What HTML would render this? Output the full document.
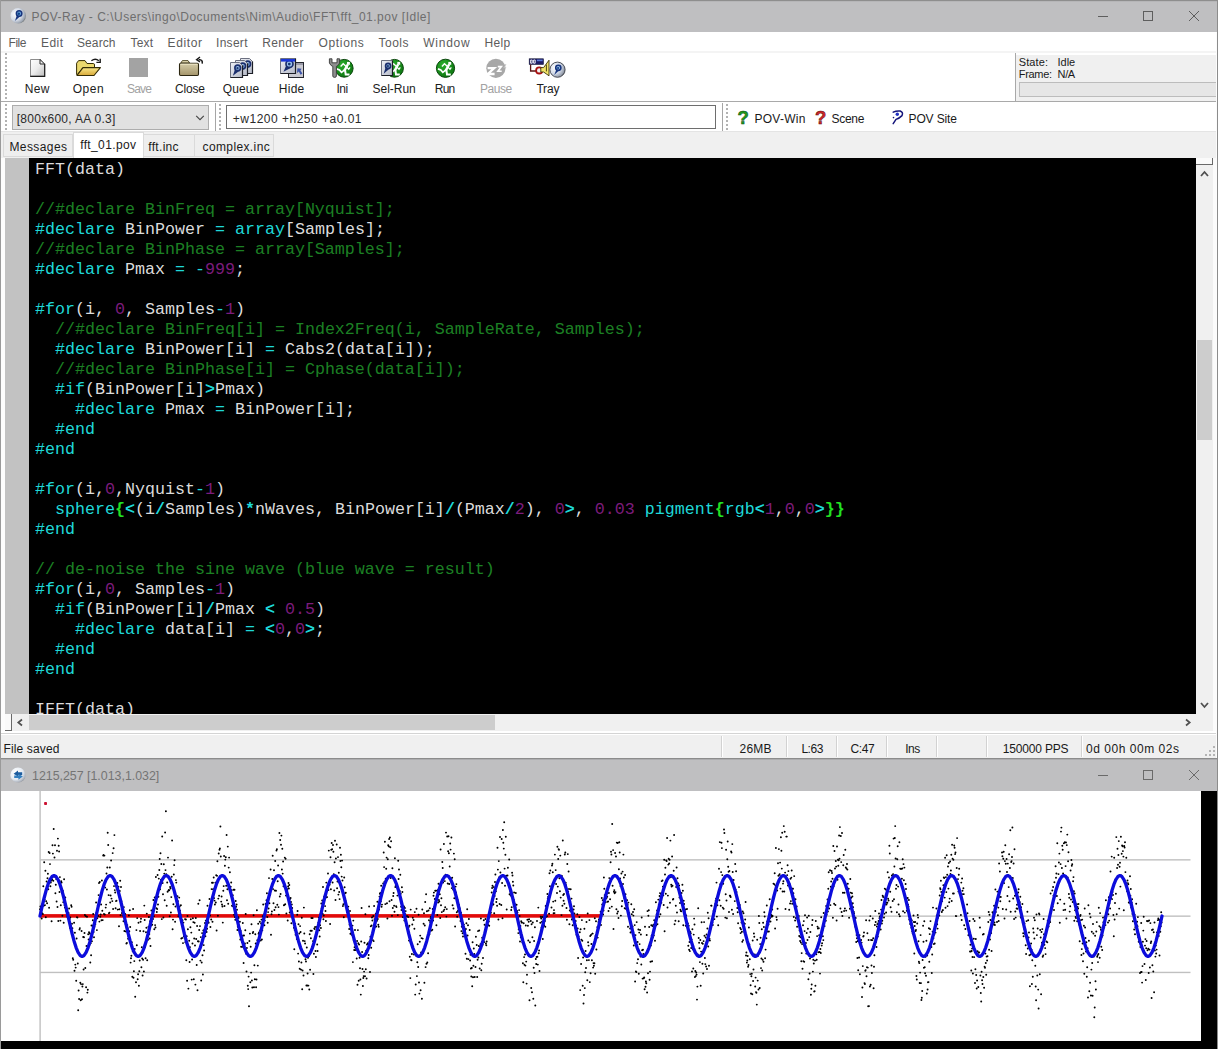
<!DOCTYPE html>
<html><head><meta charset="utf-8"><title>POV-Ray</title>
<style>
html,body{margin:0;padding:0;}
body{width:1218px;height:1049px;position:relative;overflow:hidden;background:#fff;font-family:"Liberation Sans",sans-serif;font-size:12px;color:#1a1a1a;}
.a{position:absolute;}
.t{position:absolute;white-space:pre;line-height:1;}
#code{position:absolute;left:35px;top:160px;width:1161px;height:554px;overflow:hidden;font-family:"Liberation Mono",monospace;font-size:16.67px;line-height:20px;color:#dcdcdc;white-space:pre;}
.ln{height:20px;}
.k{color:#1fd8d8;}
.c{color:#1c8024;}
.n{color:#7c1c7c;}
.o{color:#1fd8d8;font-weight:bold;}
.p{color:#1fd8d8;}
.b{color:#22e022;font-weight:bold;}
</style></head><body>
<!-- ===== window 1 frame ===== -->
<div class="a" style="left:0;top:0;width:1218px;height:32px;background:#bfbfc1;"></div>
<div class="a" style="left:0;top:0;width:1218px;height:1px;background:#8e8e8e;"></div><div class="a" style="left:0;top:1px;width:1218px;height:1px;background:#b6b6b8;"></div>
<div class="a" style="left:0;top:0;width:1px;height:759px;background:#9a9a9a;"></div>
<div class="a" style="left:1217px;top:0;width:1px;height:759px;background:#8c8c8c;"></div>
<!-- title icon -->
<svg class="a" style="left:10px;top:7px" width="17" height="17" viewBox="0 0 17 17">
<defs><radialGradient id="gi" cx="32%" cy="38%" r="75%"><stop offset="0" stop-color="#ffffff"/><stop offset="0.55" stop-color="#d3dae6"/><stop offset="0.85" stop-color="#9aa2ae"/><stop offset="1" stop-color="#5a5e58"/></radialGradient></defs>
<circle cx="8.2" cy="8.8" r="7.7" fill="url(#gi)"/>
<path d="M4.9 14 L7.2 7.6 L10.2 9.2Z" fill="#17357e"/>
<circle cx="9.1" cy="6.5" r="2.7" fill="#74aee6" stroke="#17357e" stroke-width="1.6"/>
<circle cx="8.8" cy="6.7" r="1.3" fill="#0f4488"/>
</svg>
<!-- caption buttons -->
<div class="a" style="left:1098px;top:16px;width:10px;height:1px;background:#5e5e5e;"></div>
<div class="a" style="left:1143px;top:11px;width:8px;height:8px;border:1px solid #5e5e5e;"></div>
<svg class="a" style="left:1188px;top:10px" width="12" height="12" viewBox="0 0 12 12"><path d="M1 1L11 11M11 1L1 11" stroke="#5e5e5e" stroke-width="1"/></svg>

<!-- menu bar (white) y31-52, toolbar y52-101 -->
<div class="a" style="left:1px;top:51px;width:1216px;height:2px;background:#f4f4f4;"></div>
<!-- toolbar gripper -->
<div class="a" style="left:5px;top:53px;width:2px;height:46px;background:repeating-linear-gradient(to bottom,#b2b2b2 0,#b2b2b2 2px,transparent 2px,transparent 4px);"></div>


<svg class="a" style="left:0;top:52px" width="620" height="50" viewBox="0 52 620 50">
<defs>
<linearGradient id="gnew" x1="0" y1="0" x2="1" y2="1"><stop offset="0" stop-color="#ffffff"/><stop offset="0.5" stop-color="#ececec"/><stop offset="1" stop-color="#bcbcbc"/></linearGradient>
<linearGradient id="gfold" x1="0" y1="0" x2="0" y2="1"><stop offset="0" stop-color="#f8e88a"/><stop offset="1" stop-color="#d8a838"/></linearGradient>
<linearGradient id="gdoc" x1="0" y1="0" x2="1" y2="1"><stop offset="0" stop-color="#eef0f6"/><stop offset="1" stop-color="#b4b8c6"/></linearGradient>
<linearGradient id="gtan" x1="0" y1="0" x2="0" y2="1"><stop offset="0" stop-color="#d6ceaa"/><stop offset="1" stop-color="#a4946a"/></linearGradient>
<radialGradient id="gsph2" cx="32%" cy="36%" r="75%"><stop offset="0" stop-color="#ffffff"/><stop offset="0.55" stop-color="#d0d8e6"/><stop offset="0.85" stop-color="#98a0ae"/><stop offset="1" stop-color="#50545c"/></radialGradient>
<radialGradient id="gsph" cx="40%" cy="35%" r="70%"><stop offset="0" stop-color="#f0f4ff"/><stop offset="0.5" stop-color="#7d96c8"/><stop offset="1" stop-color="#26324f"/></radialGradient>
</defs>
<!-- New -->
<path d="M30.5 59.5 H40 L44.6 64 V76.3 H30.5Z" fill="url(#gnew)" stroke="#8c8c8c" stroke-width="1"/>
<path d="M40 59.5 V64 H44.6Z" fill="#f4f4f4" stroke="#2a2a2a" stroke-width="1" stroke-linejoin="round"/>
<path d="M44.7 63.8 V76.4 H30.2" fill="none" stroke="#1c1c1c" stroke-width="1.2"/>
<!-- Open -->
<path d="M76.6 74.5 V63.2 L78.6 60.6 H85 L87 63.5 H93.4 Q94.5 63.5 94.5 65 V67.5 H83 L77 75Z" fill="#ead86e" stroke="#342c04" stroke-width="1" stroke-linejoin="round"/>
<path d="M77 75.5 L83 67.6 H100.4 L94 75.5Z" fill="url(#gfold)" stroke="#342c04" stroke-width="1.1" stroke-linejoin="round"/>
<path d="M91.4 60.8 Q95.4 57.6 98.8 60.8" fill="none" stroke="#1a1a1a" stroke-width="1.4"/>
<path d="M96.4 62.4 H100.2 V58.8" fill="none" stroke="#1a1a1a" stroke-width="1.4"/>
<!-- Save (disabled) -->
<rect x="129" y="58" width="19" height="19" fill="#a3a3a3"/>
<!-- Close -->
<path d="M180.8 63 L182.4 60.6 H188 L189.6 63Z" fill="#e4dcb4" stroke="#4a4220" stroke-width="0.9" stroke-linejoin="round"/>
<rect x="179.5" y="63.2" width="19" height="12.3" rx="1.2" fill="url(#gtan)" stroke="#2c2610" stroke-width="1.1"/>
<path d="M180.4 64.2 H197.6" stroke="#efe8c8" stroke-width="1"/>
<path d="M202.2 63.6 Q203 59.6 198.6 59.4" fill="none" stroke="#1a1a1a" stroke-width="1.5"/>
<path d="M200 57 L196.6 59.6 L200 61.8" fill="none" stroke="#1a1a1a" stroke-width="1.4"/>
<!-- Queue -->
<g><path d="M240.5 58.5 H249.5 L252.5 61.5 V73.5 H240.5Z" fill="url(#gdoc)" stroke="#6c7080" stroke-width="1"/><path d="M252.5 61.5 V73.5 H240.5" fill="none" stroke="#1c1e26" stroke-width="1.2"/>
<path d="M242.9 71.7 L245.2 64.7 L249.1 66.9Z" fill="#1b2f6e"/>
<circle cx="247.7" cy="63.9" r="2.8" fill="#9cc0ec" stroke="#1b2f6e" stroke-width="1.7"/>
<circle cx="247.5" cy="64.1" r="1.2" fill="#16366e"/></g>
<g><path d="M235.5 60.5 H244.5 L247.5 63.5 V75.5 H235.5Z" fill="url(#gdoc)" stroke="#6c7080" stroke-width="1"/><path d="M247.5 63.5 V75.5 H235.5" fill="none" stroke="#1c1e26" stroke-width="1.2"/>
<path d="M237.9 73.7 L240.2 66.7 L244.1 68.9Z" fill="#1b2f6e"/>
<circle cx="242.7" cy="65.9" r="2.8" fill="#9cc0ec" stroke="#1b2f6e" stroke-width="1.7"/>
<circle cx="242.5" cy="66.1" r="1.2" fill="#16366e"/></g>
<g><path d="M230.5 62.5 H239.5 L242.5 65.5 V77.5 H230.5Z" fill="url(#gdoc)" stroke="#6c7080" stroke-width="1"/><path d="M242.5 65.5 V77.5 H230.5" fill="none" stroke="#1c1e26" stroke-width="1.2"/>
<path d="M232.9 75.7 L235.2 68.7 L239.1 70.9Z" fill="#1b2f6e"/>
<circle cx="237.7" cy="67.9" r="2.8" fill="#9cc0ec" stroke="#1b2f6e" stroke-width="1.7"/>
<circle cx="237.5" cy="68.1" r="1.2" fill="#16366e"/></g>
<!-- Hide -->
<rect x="288.5" y="62.5" width="15" height="15" fill="#c9c9d0" stroke="#24262e"/>
<rect x="289" y="63" width="14" height="2" fill="#9a9aa8"/>
<path d="M297.4 68.2 L301.6 68.8 L300.4 70.4 L302.4 73.6 L300.6 74.8 L298.8 71.6 L297 73Z" fill="#3a52a8"/>
<g><path d="M280.5 58.5 H295.5 V73.5 H280.5Z" fill="url(#gdoc)" stroke="#6c7080" stroke-width="1"/><path d="M295.5 58.5 V73.5 H280.5" fill="none" stroke="#1c1e26" stroke-width="1.2"/>
<path d="M283.5 71.7 L286.4 64.9 L291.2 67.7Z" fill="#1b2f6e"/>
<circle cx="289.5" cy="63.9" r="3.5" fill="#9cc0ec" stroke="#1b2f6e" stroke-width="1.7"/>
<circle cx="289.3" cy="64.1" r="1.4" fill="#16366e"/></g>
<rect x="281" y="59" width="14" height="2.6" fill="#1a36d8"/>
<!-- Ini -->
<g><defs><radialGradient id="g344" cx="38%" cy="30%" r="75%"><stop offset="0" stop-color="#2aae2a"/><stop offset="1" stop-color="#0c7410"/></radialGradient></defs>
<circle cx="344.2" cy="68.3" r="8.9" fill="url(#g344)" stroke="#0a460c" stroke-width="1"/>
<g transform="translate(-101.30,0.00)" fill="none" stroke="#ffffff" stroke-linecap="square" stroke-linejoin="miter">
<rect x="448.3" y="61.9" width="2.9" height="2.9" fill="#ffffff" stroke="none"/>
<path d="M448.6 65.4 L446 70" stroke-width="2.4"/>
<path d="M447.8 67 L450 69.2 L451 67.8" stroke-width="1.2"/>
<path d="M447.2 66.2 L444.5 63.8 L442.4 66" stroke-width="1.4"/>
<path d="M445.6 70.2 L442.8 72.4 L440.8 70 L438.8 69.2" stroke-width="1.7"/>
<path d="M446.4 70.4 L447 74.4 H449.8" stroke-width="2"/>
</g></g>
<path d="M329.4 58.8 V63 Q330.8 66 332.8 66.4 V76 Q332.8 77.4 334.6 77.4 Q336.4 77.4 336.4 76 V66.4 Q338.4 66 339.6 63 V58.8 L337 58.8 V62.8 H332 V58.8Z" fill="#8e8e8e" stroke="#3a3a3a" stroke-width="0.9" stroke-linejoin="round"/>
<!-- Sel-Run -->
<g><defs><radialGradient id="g394" cx="38%" cy="30%" r="75%"><stop offset="0" stop-color="#2aae2a"/><stop offset="1" stop-color="#0c7410"/></radialGradient></defs>
<circle cx="394.5" cy="68.3" r="8.9" fill="url(#g394)" stroke="#0a460c" stroke-width="1"/>
<g transform="translate(-51.00,0.00)" fill="none" stroke="#ffffff" stroke-linecap="square" stroke-linejoin="miter">
<rect x="448.3" y="61.9" width="2.9" height="2.9" fill="#ffffff" stroke="none"/>
<path d="M448.6 65.4 L446 70" stroke-width="2.4"/>
<path d="M447.8 67 L450 69.2 L451 67.8" stroke-width="1.2"/>
<path d="M447.2 66.2 L444.5 63.8 L442.4 66" stroke-width="1.4"/>
<path d="M445.6 70.2 L442.8 72.4 L440.8 70 L438.8 69.2" stroke-width="1.7"/>
<path d="M446.4 70.4 L447 74.4 H449.8" stroke-width="2"/>
</g></g>
<g><path d="M381.5 60.5 H392.5 V75.5 H381.5Z" fill="url(#gdoc)" stroke="#6c7080" stroke-width="1"/><path d="M392.5 60.5 V75.5 H381.5" fill="none" stroke="#1c1e26" stroke-width="1.2"/>
<path d="M383.7 73.7 L385.8 66.7 L389.4 68.7Z" fill="#1b2f6e"/>
<circle cx="388.1" cy="65.9" r="2.5" fill="#9cc0ec" stroke="#1b2f6e" stroke-width="1.7"/>
<circle cx="387.9" cy="66.1" r="1.1" fill="#16366e"/></g>
<!-- Run -->
<g><defs><radialGradient id="g445" cx="38%" cy="30%" r="75%"><stop offset="0" stop-color="#2aae2a"/><stop offset="1" stop-color="#0c7410"/></radialGradient></defs>
<circle cx="445.5" cy="68.3" r="9.1" fill="url(#g445)" stroke="#0a460c" stroke-width="1"/>
<g transform="translate(0.00,0.00)" fill="none" stroke="#ffffff" stroke-linecap="square" stroke-linejoin="miter">
<rect x="448.3" y="61.9" width="2.9" height="2.9" fill="#ffffff" stroke="none"/>
<path d="M448.6 65.4 L446 70" stroke-width="2.4"/>
<path d="M447.8 67 L450 69.2 L451 67.8" stroke-width="1.2"/>
<path d="M447.2 66.2 L444.5 63.8 L442.4 66" stroke-width="1.4"/>
<path d="M445.6 70.2 L442.8 72.4 L440.8 70 L438.8 69.2" stroke-width="1.7"/>
<path d="M446.4 70.4 L447 74.4 H449.8" stroke-width="2"/>
</g></g>
<!-- Pause (disabled) -->
<circle cx="495.9" cy="68.3" r="9.6" fill="#a8a8a8"/>
<path d="M487.6 68.2 H494.2 L487.8 74 H494.6" fill="none" stroke="#fff" stroke-width="2.3"/>
<path d="M497.8 66.6 H501.4 L497.9 71.2 H501.7" fill="none" stroke="#fff" stroke-width="1.6"/>
<path d="M503.8 64.6 H506 L503.8 67.6 H506.2" fill="none" stroke="#c4c4c4" stroke-width="0.8"/>
<!-- Tray -->
<rect x="529.2" y="58.8" width="14.2" height="5.6" fill="#1c1c66" stroke="#101030" stroke-width="0.6"/>
<path d="M530.6 60 h1.6 v3.2 h-1.6z M533.6 60 h1.6 v3.2 h-1.6z" fill="none" stroke="#fff" stroke-width="0.9"/>
<rect x="537" y="59.6" width="5.6" height="1.6" fill="#5a78d8"/>
<path d="M530.6 64.6 V71 H536.4" fill="none" stroke="#5a1414" stroke-width="1.3"/>
<circle cx="539.2" cy="70.4" r="3.1" fill="#f2f2f2" stroke="#a81010" stroke-width="1.8"/>
<path d="M540.8 67.6 H543.6 L549 60.2 V75.8 L543.6 72 H540.8Z" fill="#f2e468" stroke="#3a3208" stroke-width="0.9" stroke-linejoin="round"/>
<path d="M546.4 64.6 V71.4" stroke="#3a3208" stroke-width="0.9"/>
<circle cx="557.5" cy="69.7" r="7.6" fill="url(#gsph2)" stroke="#3c4048" stroke-width="0.9"/>
<path d="M554.2 75 L556.4 69.4 L559 70.6Z" fill="#17357e"/>
<circle cx="558.3" cy="67.8" r="2.6" fill="#9cc0ec" stroke="#17357e" stroke-width="1.6"/>
<circle cx="558.1" cy="68" r="1.1" fill="#0f4488"/>
</svg>
<!-- help icons -->
<svg class="a" style="left:735px;top:106px" width="175" height="22" viewBox="735 106 175 22">
<text x="737.6" y="123.5" font-family="Liberation Sans" font-weight="bold" font-size="18.5" fill="#1e9a1e" stroke="#0a4a0a" stroke-width="0.5">?</text>
<text x="814.9" y="123.5" font-family="Liberation Sans" font-weight="bold" font-size="18.5" fill="#d02828" stroke="#5a0a0a" stroke-width="0.5">?</text>
<path d="M893.2 112.2 Q896.4 110.6 900.2 111 Q903.6 112.4 902 115.6 Q899.2 118.4 896 119.4 L893.2 123.6" fill="none" stroke="#14147a" stroke-width="1.5" stroke-linecap="round" stroke-linejoin="round"/>
<circle cx="897.3" cy="114.3" r="1.7" fill="#2232c4"/><circle cx="893.5" cy="117.6" r="0.8" fill="#14147a"/>
</svg>


<!-- state panel -->
<div class="a" style="left:1016px;top:55px;width:200px;height:46px;background:#f0f0f0;"></div>
<div class="a" style="left:1015px;top:53px;width:1px;height:48px;background:#a8a8a8;"></div>
<div class="a" style="left:1019px;top:82px;width:198px;height:15px;background:#e6e6e6;border:1px solid #bcbcbc;box-sizing:border-box;"></div>
<div class="a" style="left:1px;top:101px;width:1216px;height:1px;background:#a9a9a9;"></div>

<!-- second toolbar row y102-131 -->
<div class="a" style="left:5px;top:104px;width:2px;height:26px;background:repeating-linear-gradient(to bottom,#b2b2b2 0,#b2b2b2 2px,transparent 2px,transparent 4px);"></div>
<div class="a" style="left:12px;top:105px;width:197px;height:25px;background:#e1e1e1;border:1px solid #adadad;box-sizing:border-box;"></div>
<svg class="a" style="left:195px;top:114px" width="10" height="8" viewBox="0 0 10 8"><path d="M1.2 1.9L5 5.7L8.8 1.9" fill="none" stroke="#444" stroke-width="1.1"/></svg>
<div class="a" style="left:215px;top:103px;width:1px;height:28px;background:#a6a6a6;"></div>
<div class="a" style="left:219px;top:104px;width:2px;height:26px;background:repeating-linear-gradient(to bottom,#b2b2b2 0,#b2b2b2 2px,transparent 2px,transparent 4px);"></div>
<div class="a" style="left:226px;top:105px;width:490px;height:24px;background:#fff;border:1px solid #6e6e6e;box-sizing:border-box;"></div>
<div class="a" style="left:722px;top:103px;width:1px;height:28px;background:#a6a6a6;"></div>
<div class="a" style="left:726px;top:104px;width:2px;height:26px;background:repeating-linear-gradient(to bottom,#b2b2b2 0,#b2b2b2 2px,transparent 2px,transparent 4px);"></div>

<!-- tab row y131-158 -->
<div class="a" style="left:1px;top:131px;width:1216px;height:27px;background:#f0f0f0;"></div>
<div class="a" style="left:1px;top:131px;width:1216px;height:1px;background:#e4e4e4;"></div>
<div class="a" style="left:3px;top:134px;width:70px;height:23px;background:#eeeeee;border:1px solid #dadada;box-sizing:border-box;"></div>
<div class="a" style="left:143px;top:134px;width:52px;height:23px;background:#eeeeee;border:1px solid #dadada;box-sizing:border-box;"></div>
<div class="a" style="left:194px;top:134px;width:80px;height:23px;background:#eeeeee;border:1px solid #dadada;box-sizing:border-box;"></div>
<div class="a" style="left:73px;top:132px;width:71px;height:26px;background:#ffffff;border:1px solid #dadada;border-bottom:none;box-sizing:border-box;"></div>

<!-- editor -->
<div class="a" style="left:1px;top:158px;width:4px;height:573px;background:#fdfdfd;"></div>
<div class="a" style="left:5px;top:158px;width:24px;height:556px;background:#c2c2c2;"></div>
<div class="a" style="left:29px;top:158px;width:1167px;height:556px;background:#000;"></div>
<div id="code"><div class="ln">FFT(data)</div><div class="ln">&nbsp;</div><div class="ln"><span class="c">//#declare BinFreq = array[Nyquist];</span></div><div class="ln"><span class="k">#declare</span> BinPower <span class="p">=</span> <span class="k">array</span>[Samples];</div><div class="ln"><span class="c">//#declare BinPhase = array[Samples];</span></div><div class="ln"><span class="k">#declare</span> Pmax <span class="p">=</span> <span class="p">-</span><span class="n">999</span>;</div><div class="ln">&nbsp;</div><div class="ln"><span class="k">#for</span>(i, <span class="n">0</span>, Samples<span class="p">-</span><span class="n">1</span>)</div><div class="ln">  <span class="c">//#declare BinFreq[i] = Index2Freq(i, SampleRate, Samples);</span></div><div class="ln">  <span class="k">#declare</span> BinPower[i] <span class="p">=</span> Cabs2(data[i]);</div><div class="ln">  <span class="c">//#declare BinPhase[i] = Cphase(data[i]);</span></div><div class="ln">  <span class="k">#if</span>(BinPower[i]<span class="o">&gt;</span>Pmax)</div><div class="ln">    <span class="k">#declare</span> Pmax <span class="p">=</span> BinPower[i];</div><div class="ln">  <span class="k">#end</span></div><div class="ln"><span class="k">#end</span></div><div class="ln">&nbsp;</div><div class="ln"><span class="k">#for</span>(i,<span class="n">0</span>,Nyquist<span class="p">-</span><span class="n">1</span>)</div><div class="ln">  <span class="k">sphere</span><span class="b">{</span><span class="o">&lt;</span>(i<span class="o">/</span>Samples)<span class="o">*</span>nWaves, BinPower[i]<span class="o">/</span>(Pmax<span class="o">/</span><span class="n">2</span>), <span class="n">0</span><span class="o">&gt;</span>, <span class="n">0.03</span> <span class="k">pigment</span><span class="b">{</span><span class="k">rgb</span><span class="o">&lt;</span><span class="n">1</span>,<span class="n">0</span>,<span class="n">0</span><span class="o">&gt;</span><span class="b">}}</span></div><div class="ln"><span class="k">#end</span></div><div class="ln">&nbsp;</div><div class="ln"><span class="c">// de-noise the sine wave (blue wave = result)</span></div><div class="ln"><span class="k">#for</span>(i,<span class="n">0</span>, Samples<span class="p">-</span><span class="n">1</span>)</div><div class="ln">  <span class="k">#if</span>(BinPower[i]<span class="o">/</span>Pmax <span class="o">&lt;</span> <span class="n">0.5</span>)</div><div class="ln">    <span class="k">#declare</span> data[i] <span class="p">=</span> <span class="o">&lt;</span><span class="n">0</span>,<span class="n">0</span><span class="o">&gt;</span>;</div><div class="ln">  <span class="k">#end</span></div><div class="ln"><span class="k">#end</span></div><div class="ln">&nbsp;</div><div class="ln">IFFT(data)</div></div>
<!-- v scrollbar -->
<div class="a" style="left:1196px;top:158px;width:17px;height:556px;background:#f0f0f0;"></div>
<div class="a" style="left:1196px;top:158px;width:17px;height:7px;background:#fafafa;border-right:1px solid #696969;border-bottom:1px solid #696969;box-sizing:border-box;"></div>
<svg class="a" style="left:1200px;top:170px" width="9" height="8" viewBox="0 0 9 8"><path d="M1 6L4.5 2L8 6" fill="none" stroke="#505050" stroke-width="1.8"/></svg>
<div class="a" style="left:1197px;top:340px;width:15px;height:100px;background:#cdcdcd;"></div>
<svg class="a" style="left:1200px;top:701px" width="9" height="8" viewBox="0 0 9 8"><path d="M1 2L4.5 6L8 2" fill="none" stroke="#505050" stroke-width="1.8"/></svg>
<!-- h scrollbar -->
<div class="a" style="left:5px;top:714px;width:1208px;height:17px;background:#f0f0f0;"></div>
<div class="a" style="left:5px;top:714px;width:7px;height:17px;background:#fafafa;border-right:1px solid #696969;border-bottom:1px solid #696969;box-sizing:border-box;"></div>
<svg class="a" style="left:16px;top:718px" width="8" height="9" viewBox="0 0 8 9"><path d="M6 1.5L2.3 4.5L6 7.5" fill="none" stroke="#505050" stroke-width="1.7"/></svg>
<div class="a" style="left:29px;top:715px;width:466px;height:15px;background:#cdcdcd;"></div>
<svg class="a" style="left:1184px;top:718px" width="8" height="9" viewBox="0 0 8 9"><path d="M2 1.5L5.7 4.5L2 7.5" fill="none" stroke="#505050" stroke-width="1.7"/></svg>
<div class="a" style="left:1213px;top:158px;width:4px;height:573px;background:#fbfbfb;"></div>

<!-- status bar -->
<div class="a" style="left:1px;top:731px;width:1216px;height:28px;background:#f0f0f0;"></div>
<div class="a" style="left:1px;top:731px;width:1216px;height:2px;background:#ffffff;"></div>
<div class="a" style="left:1px;top:733px;width:1216px;height:1px;background:#d4d4d4;"></div>
<div class="a" style="left:1px;top:734px;width:1216px;height:1px;background:#ffffff;"></div>
<div class="a" style="left:721px;top:736px;width:1px;height:21px;background:#d2d2d2;"></div><div class="a" style="left:722px;top:736px;width:1px;height:21px;background:#ffffff;"></div><div class="a" style="left:786px;top:736px;width:1px;height:21px;background:#d2d2d2;"></div><div class="a" style="left:787px;top:736px;width:1px;height:21px;background:#ffffff;"></div><div class="a" style="left:836px;top:736px;width:1px;height:21px;background:#d2d2d2;"></div><div class="a" style="left:837px;top:736px;width:1px;height:21px;background:#ffffff;"></div><div class="a" style="left:886px;top:736px;width:1px;height:21px;background:#d2d2d2;"></div><div class="a" style="left:887px;top:736px;width:1px;height:21px;background:#ffffff;"></div><div class="a" style="left:936px;top:736px;width:1px;height:21px;background:#d2d2d2;"></div><div class="a" style="left:937px;top:736px;width:1px;height:21px;background:#ffffff;"></div><div class="a" style="left:986px;top:736px;width:1px;height:21px;background:#d2d2d2;"></div><div class="a" style="left:987px;top:736px;width:1px;height:21px;background:#ffffff;"></div><div class="a" style="left:1081px;top:736px;width:1px;height:21px;background:#d2d2d2;"></div><div class="a" style="left:1082px;top:736px;width:1px;height:21px;background:#ffffff;"></div>
<svg class="a" style="left:1205px;top:746px" width="11" height="11" viewBox="0 0 11 11" fill="#b4b4b4"><rect x="8" y="0" width="2" height="2"/><rect x="4" y="4" width="2" height="2"/><rect x="8" y="4" width="2" height="2"/><rect x="0" y="8" width="2" height="2"/><rect x="4" y="8" width="2" height="2"/><rect x="8" y="8" width="2" height="2"/></svg>

<div class="a" style="left:1216px;top:32px;width:1px;height:726px;background:#fcfcfc;"></div>
<!-- ===== window 2 ===== -->
<div class="a" style="left:0;top:758px;width:1218px;height:33px;background:#bfbfc1;"></div>
<div class="a" style="left:0;top:758px;width:1218px;height:1px;background:#8c8c8c;"></div><div class="a" style="left:0;top:759px;width:1218px;height:1px;background:#adadaf;"></div>
<div class="a" style="left:0;top:758px;width:1px;height:291px;background:#9a9a9a;"></div>
<svg class="a" style="left:10px;top:767px" width="17" height="17" viewBox="0 0 17 17">
<defs><radialGradient id="g2" cx="35%" cy="32%" r="78%"><stop offset="0" stop-color="#ffffff"/><stop offset="0.6" stop-color="#e4eaf2"/><stop offset="0.88" stop-color="#a8aeb8"/><stop offset="1" stop-color="#6c6c6c"/></radialGradient></defs>
<circle cx="8" cy="8" r="7.6" fill="url(#g2)"/>
<path d="M3.6 6.8 L8 3.4 V5.2 H12.2 V8 H8 V9.6Z" fill="#1d5c9e"/>
<path d="M12.8 9.4 L8.4 12.8 V11 H4.2 V8.4 H8.4 V6.6Z" fill="#2a78bc" opacity="0.95"/>
</svg>
<div class="a" style="left:1098px;top:775px;width:10px;height:1px;background:#6a6a6a;"></div>
<div class="a" style="left:1143px;top:770px;width:8px;height:8px;border:1px solid #6a6a6a;"></div>
<svg class="a" style="left:1188px;top:769px" width="12" height="12" viewBox="0 0 12 12"><path d="M1 1L11 11M11 1L1 11" stroke="#6a6a6a" stroke-width="1"/></svg>

<!-- render image 1200x250 at (1,791) -->
<div class="a" style="left:1px;top:791px;width:1217px;height:258px;background:#000;"></div>
<svg class="a" style="left:0;top:0" width="1218" height="1049" viewBox="0 0 1218 1049">
<rect x="1" y="791" width="1200" height="250" fill="#fff"/>
<rect x="39.4" y="791" width="1.4" height="250" fill="#c0c0c0"/>
<rect x="40" y="859.15" width="1150.5" height="1.4" fill="#c0c0c0"/>
<rect x="40" y="915.45" width="1150.5" height="1.4" fill="#c0c0c0"/>
<rect x="40" y="971.75" width="1150.5" height="1.4" fill="#c0c0c0"/>
<rect x="40" y="914.1" width="560" height="3.6" fill="#e20a0a"/>
<path d="M40.0 909.2h0M40.4 906.4h0M40.8 913.5h0M41.2 907.9h0M41.7 918.5h0M42.1 913.3h0M42.5 904.1h0M42.9 913.9h0M43.3 886.3h0M43.7 905.7h0M44.2 862.3h0M44.6 899.6h0M45.0 905.1h0M45.4 870.7h0M45.8 917.3h0M46.2 901.3h0M46.6 881.4h0M47.1 903.2h0M47.5 878.2h0M47.9 873.7h0M48.3 889.3h0M48.7 852.0h0M49.1 907.7h0M49.6 853.0h0M50.0 864.1h0M50.4 886.3h0M50.8 882.5h0M51.2 880.6h0M51.6 921.2h0M52.1 879.5h0M52.5 845.2h0M52.9 853.6h0M53.3 880.7h0M53.7 828.9h0M54.1 876.8h0M54.5 857.4h0M55.0 845.2h0M55.4 893.3h0M55.8 884.8h0M56.2 879.1h0M56.6 901.4h0M57.0 850.8h0M57.5 906.9h0M57.9 838.6h0M58.3 920.9h0M58.7 845.7h0M59.1 851.4h0M59.5 892.0h0M59.9 877.1h0M60.4 920.6h0M60.8 905.3h0M61.2 881.3h0M61.6 882.4h0M62.0 893.0h0M62.4 915.7h0M62.9 891.0h0M63.3 902.2h0M63.7 922.7h0M64.1 879.2h0M64.5 905.1h0M64.9 907.6h0M65.3 897.4h0M65.8 910.1h0M66.2 911.1h0M66.6 911.2h0M67.0 914.6h0M67.4 916.7h0M67.8 912.8h0M68.3 913.6h0M68.7 913.1h0M69.1 908.4h0M69.5 919.3h0M69.9 927.7h0M70.3 917.5h0M70.8 926.0h0M71.2 905.3h0M71.6 906.7h0M72.0 923.8h0M72.4 928.3h0M72.8 958.2h0M73.2 959.7h0M73.7 940.1h0M74.1 922.8h0M74.5 970.8h0M74.9 932.8h0M75.3 964.6h0M75.7 967.6h0M76.2 980.8h0M76.6 938.5h0M77.0 917.3h0M77.4 917.6h0M77.8 963.5h0M78.2 1010.2h0M78.6 990.5h0M79.1 998.9h0M79.5 929.4h0M79.9 928.1h0M80.3 982.8h0M80.7 1000.3h0M81.1 984.1h0M81.6 931.0h0M82.0 999.3h0M82.4 986.4h0M82.8 984.1h0M83.2 937.0h0M83.6 969.4h0M84.0 937.2h0M84.5 933.0h0M84.9 914.9h0M85.3 967.9h0M85.7 915.9h0M86.1 987.2h0M86.5 946.0h0M87.0 916.7h0M87.4 992.6h0M87.8 989.7h0M88.2 934.3h0M88.6 939.4h0M89.0 932.3h0M89.5 944.7h0M89.9 933.4h0M90.3 962.4h0M90.7 943.2h0M91.1 955.3h0M91.5 925.4h0M91.9 941.3h0M92.4 925.8h0M92.8 920.3h0M93.2 914.0h0M93.6 931.9h0M94.0 937.3h0M94.4 926.7h0M94.9 921.9h0M95.3 924.2h0M95.7 919.3h0M96.1 902.4h0M96.5 912.6h0M96.9 930.1h0M97.3 918.2h0M97.8 905.2h0M98.2 916.0h0M98.6 895.1h0M99.0 882.9h0M99.4 921.6h0M99.8 882.0h0M100.3 916.7h0M100.7 914.5h0M101.1 904.5h0M101.5 920.2h0M101.9 880.5h0M102.3 910.8h0M102.7 920.1h0M103.2 855.4h0M103.6 854.9h0M104.0 914.0h0M104.4 855.6h0M104.8 914.4h0M105.2 887.6h0M105.7 907.6h0M106.1 904.6h0M106.5 873.5h0M106.9 889.4h0M107.3 867.4h0M107.7 832.7h0M108.2 845.0h0M108.6 895.1h0M109.0 913.3h0M109.4 912.6h0M109.8 867.5h0M110.2 902.5h0M110.6 895.5h0M111.1 860.4h0M111.5 898.6h0M111.9 876.1h0M112.3 901.1h0M112.7 853.1h0M113.1 908.9h0M113.6 848.2h0M114.0 886.1h0M114.4 835.1h0M114.8 890.1h0M115.2 892.5h0M115.6 908.2h0M116.0 901.1h0M116.5 900.8h0M116.9 885.8h0M117.3 882.9h0M117.7 909.6h0M118.1 890.2h0M118.5 886.8h0M119.0 926.2h0M119.4 909.2h0M119.8 890.9h0M120.2 880.8h0M120.6 915.3h0M121.0 887.0h0M121.4 901.2h0M121.9 912.9h0M122.3 910.4h0M122.7 912.2h0M123.1 915.8h0M123.5 921.3h0M123.9 907.1h0M124.4 930.9h0M124.8 917.3h0M125.2 913.9h0M125.6 923.9h0M126.0 931.5h0M126.4 943.4h0M126.9 943.0h0M127.3 925.1h0M127.7 928.2h0M128.1 938.8h0M128.5 936.5h0M128.9 915.5h0M129.3 931.2h0M129.8 910.3h0M130.2 926.9h0M130.6 962.6h0M131.0 958.2h0M131.4 955.7h0M131.8 942.2h0M132.3 976.7h0M132.7 951.2h0M133.1 909.0h0M133.5 977.7h0M133.9 971.2h0M134.3 961.1h0M134.7 948.9h0M135.2 996.7h0M135.6 955.0h0M136.0 982.2h0M136.4 930.1h0M136.8 945.3h0M137.2 918.1h0M137.7 979.2h0M138.1 974.3h0M138.5 922.7h0M138.9 985.7h0M139.3 971.2h0M139.7 960.5h0M140.1 930.9h0M140.6 921.8h0M141.0 918.8h0M141.4 967.2h0M141.8 947.2h0M142.2 958.5h0M142.6 975.5h0M143.1 959.7h0M143.5 931.2h0M143.9 971.5h0M144.3 905.6h0M144.7 920.0h0M145.1 947.0h0M145.6 958.3h0M146.0 932.3h0M146.4 927.8h0M146.8 913.6h0M147.2 960.2h0M147.6 935.8h0M148.0 939.7h0M148.5 926.8h0M148.9 917.0h0M149.3 934.0h0M149.7 938.5h0M150.1 921.3h0M150.5 946.0h0M151.0 925.4h0M151.4 910.4h0M151.8 921.5h0M152.2 924.7h0M152.6 914.4h0M153.0 918.9h0M153.4 900.0h0M153.9 916.3h0M154.3 929.3h0M154.7 897.5h0M155.1 925.1h0M155.5 927.5h0M155.9 877.0h0M156.4 908.1h0M156.8 912.0h0M157.2 908.9h0M157.6 874.9h0M158.0 904.5h0M158.4 896.8h0M158.8 878.6h0M159.3 870.0h0M159.7 859.0h0M160.1 889.2h0M160.5 853.3h0M160.9 880.0h0M161.3 863.9h0M161.8 919.1h0M162.2 836.5h0M162.6 882.9h0M163.0 894.3h0M163.4 917.5h0M163.8 864.2h0M164.3 873.6h0M164.7 900.3h0M165.1 832.5h0M165.5 870.1h0M165.9 811.3h0M166.3 874.2h0M166.7 905.8h0M167.2 882.4h0M167.6 891.8h0M168.0 857.6h0M168.4 890.6h0M168.8 889.9h0M169.2 890.3h0M169.7 916.3h0M170.1 886.9h0M170.5 888.5h0M170.9 912.5h0M171.3 897.1h0M171.7 876.8h0M172.1 840.5h0M172.6 929.3h0M173.0 919.6h0M173.4 904.3h0M173.8 874.4h0M174.2 865.1h0M174.6 860.3h0M175.1 921.7h0M175.5 906.5h0M175.9 880.1h0M176.3 882.6h0M176.7 901.6h0M177.1 904.8h0M177.5 896.3h0M178.0 901.1h0M178.4 916.3h0M178.8 914.6h0M179.2 897.6h0M179.6 906.6h0M180.0 910.7h0M180.5 915.0h0M180.9 905.2h0M181.3 938.5h0M181.7 920.1h0M182.1 937.9h0M182.5 920.2h0M183.0 943.1h0M183.4 922.6h0M183.8 936.3h0M184.2 932.5h0M184.6 938.1h0M185.0 919.1h0M185.4 942.3h0M185.9 919.5h0M186.3 960.2h0M186.7 936.3h0M187.1 980.8h0M187.5 915.9h0M187.9 929.2h0M188.4 988.6h0M188.8 948.6h0M189.2 940.7h0M189.6 961.9h0M190.0 947.1h0M190.4 927.2h0M190.8 919.2h0M191.3 932.6h0M191.7 979.6h0M192.1 959.5h0M192.5 943.4h0M192.9 918.3h0M193.3 922.1h0M193.8 979.3h0M194.2 938.5h0M194.6 922.7h0M195.0 945.4h0M195.4 984.6h0M195.8 917.9h0M196.2 938.9h0M196.7 965.0h0M197.1 925.9h0M197.5 990.3h0M197.9 941.3h0M198.3 903.8h0M198.7 941.5h0M199.2 930.0h0M199.6 900.3h0M200.0 926.1h0M200.4 960.6h0M200.8 937.1h0M201.2 980.5h0M201.7 962.5h0M202.1 933.1h0M202.5 955.3h0M202.9 974.5h0M203.3 930.4h0M203.7 945.1h0M204.1 950.5h0M204.6 929.4h0M205.0 922.9h0M205.4 936.2h0M205.8 920.6h0M206.2 931.1h0M206.6 931.9h0M207.1 928.8h0M207.5 905.8h0M207.9 916.6h0M208.3 922.0h0M208.7 922.7h0M209.1 910.3h0M209.5 899.0h0M210.0 915.4h0M210.4 927.0h0M210.8 905.3h0M211.2 919.5h0M211.6 889.1h0M212.0 882.7h0M212.5 921.7h0M212.9 882.7h0M213.3 889.3h0M213.7 877.5h0M214.1 898.1h0M214.5 900.6h0M214.9 904.4h0M215.4 882.6h0M215.8 902.5h0M216.2 875.3h0M216.6 930.4h0M217.0 875.8h0M217.4 861.3h0M217.9 915.7h0M218.3 898.6h0M218.7 853.4h0M219.1 895.7h0M219.5 849.7h0M219.9 848.5h0M220.4 826.4h0M220.8 856.4h0M221.2 901.6h0M221.6 896.5h0M222.0 904.5h0M222.4 906.5h0M222.8 922.6h0M223.3 890.8h0M223.7 886.1h0M224.1 856.0h0M224.5 906.0h0M224.9 865.7h0M225.3 859.6h0M225.8 857.2h0M226.2 885.7h0M226.6 834.9h0M227.0 900.3h0M227.4 889.2h0M227.8 846.6h0M228.2 903.8h0M228.7 867.6h0M229.1 857.6h0M229.5 887.4h0M229.9 872.2h0M230.3 890.6h0M230.7 886.8h0M231.2 882.5h0M231.6 890.3h0M232.0 905.8h0M232.4 906.1h0M232.8 895.3h0M233.2 903.3h0M233.6 889.8h0M234.1 914.7h0M234.5 889.7h0M234.9 917.0h0M235.3 919.8h0M235.7 901.0h0M236.1 906.8h0M236.6 904.5h0M237.0 909.8h0M237.4 930.0h0M237.8 926.7h0M238.2 917.1h0M238.6 918.1h0M239.1 926.6h0M239.5 929.0h0M239.9 921.7h0M240.3 939.4h0M240.7 931.0h0M241.1 946.7h0M241.5 935.9h0M242.0 942.1h0M242.4 946.7h0M242.8 922.9h0M243.2 935.6h0M243.6 962.9h0M244.0 935.4h0M244.5 944.7h0M244.9 943.4h0M245.3 930.2h0M245.7 914.0h0M246.1 953.8h0M246.5 971.4h0M246.9 947.9h0M247.4 943.0h0M247.8 985.7h0M248.2 989.1h0M248.6 976.6h0M249.0 1006.2h0M249.4 940.9h0M249.9 933.6h0M250.3 982.3h0M250.7 946.8h0M251.1 972.6h0M251.5 924.2h0M251.9 980.5h0M252.3 987.4h0M252.8 932.9h0M253.2 931.9h0M253.6 915.3h0M254.0 987.2h0M254.4 965.3h0M254.8 979.2h0M255.3 934.3h0M255.7 943.4h0M256.1 987.3h0M256.5 979.5h0M256.9 910.2h0M257.3 940.3h0M257.8 965.6h0M258.2 923.8h0M258.6 933.7h0M259.0 932.5h0M259.4 936.3h0M259.8 921.8h0M260.2 930.4h0M260.7 940.5h0M261.1 923.4h0M261.5 919.6h0M261.9 939.5h0M262.3 930.2h0M262.7 916.2h0M263.2 904.5h0M263.6 918.2h0M264.0 914.4h0M264.4 925.2h0M264.8 920.6h0M265.2 915.2h0M265.6 903.9h0M266.1 910.2h0M266.5 900.3h0M266.9 893.3h0M267.3 917.0h0M267.7 922.7h0M268.1 912.1h0M268.6 908.5h0M269.0 878.1h0M269.4 903.2h0M269.8 891.3h0M270.2 894.8h0M270.6 869.5h0M271.0 934.7h0M271.5 914.3h0M271.9 911.5h0M272.3 878.9h0M272.7 855.7h0M273.1 889.1h0M273.5 903.2h0M274.0 870.2h0M274.4 909.9h0M274.8 890.4h0M275.2 860.9h0M275.6 907.2h0M276.0 890.7h0M276.5 850.4h0M276.9 849.2h0M277.3 904.7h0M277.7 881.3h0M278.1 865.4h0M278.5 907.1h0M278.9 914.6h0M279.4 833.0h0M279.8 896.4h0M280.2 839.9h0M280.6 893.9h0M281.0 844.8h0M281.4 835.6h0M281.9 869.4h0M282.3 848.8h0M282.7 873.6h0M283.1 861.4h0M283.5 886.2h0M283.9 905.3h0M284.3 904.9h0M284.8 857.6h0M285.2 904.2h0M285.6 858.7h0M286.0 895.6h0M286.4 913.4h0M286.8 888.8h0M287.3 889.9h0M287.7 920.4h0M288.1 886.5h0M288.5 883.0h0M288.9 888.5h0M289.3 885.0h0M289.7 912.4h0M290.2 898.8h0M290.6 897.9h0M291.0 901.9h0M291.4 923.3h0M291.8 904.5h0M292.2 907.9h0M292.7 918.1h0M293.1 916.7h0M293.5 920.4h0M293.9 927.8h0M294.3 949.2h0M294.7 929.9h0M295.2 923.6h0M295.6 934.7h0M296.0 930.1h0M296.4 933.0h0M296.8 939.0h0M297.2 914.8h0M297.6 910.9h0M298.1 953.6h0M298.5 924.3h0M298.9 961.5h0M299.3 933.5h0M299.7 968.7h0M300.1 926.1h0M300.6 931.9h0M301.0 969.6h0M301.4 962.5h0M301.8 917.7h0M302.2 989.2h0M302.6 970.5h0M303.0 940.7h0M303.5 975.4h0M303.9 907.6h0M304.3 933.5h0M304.7 941.1h0M305.1 943.4h0M305.5 959.2h0M306.0 961.4h0M306.4 985.5h0M306.8 947.5h0M307.2 985.5h0M307.6 973.4h0M308.0 957.8h0M308.4 985.6h0M308.9 956.2h0M309.3 989.5h0M309.7 934.3h0M310.1 969.7h0M310.5 930.7h0M310.9 938.3h0M311.4 918.0h0M311.8 930.7h0M312.2 946.8h0M312.6 917.9h0M313.0 941.1h0M313.4 973.9h0M313.9 953.7h0M314.3 928.5h0M314.7 929.0h0M315.1 926.9h0M315.5 951.0h0M315.9 956.9h0M316.3 933.8h0M316.8 926.9h0M317.2 944.5h0M317.6 951.0h0M318.0 929.6h0M318.4 922.6h0M318.8 917.6h0M319.3 930.2h0M319.7 936.4h0M320.1 925.2h0M320.5 914.0h0M320.9 927.9h0M321.3 903.5h0M321.7 908.4h0M322.2 900.4h0M322.6 913.7h0M323.0 887.0h0M323.4 919.2h0M323.8 915.5h0M324.2 896.7h0M324.7 895.3h0M325.1 906.1h0M325.5 910.9h0M325.9 920.9h0M326.3 882.6h0M326.7 897.3h0M327.1 897.1h0M327.6 886.0h0M328.0 873.5h0M328.4 889.9h0M328.8 850.6h0M329.2 885.1h0M329.6 884.8h0M330.1 924.0h0M330.5 857.2h0M330.9 889.3h0M331.3 849.8h0M331.7 843.0h0M332.1 849.3h0M332.6 882.5h0M333.0 845.0h0M333.4 851.7h0M333.8 874.3h0M334.2 890.4h0M334.6 862.2h0M335.0 840.8h0M335.5 899.9h0M335.9 858.5h0M336.3 875.9h0M336.7 844.5h0M337.1 888.3h0M337.5 881.5h0M338.0 857.1h0M338.4 894.6h0M338.8 872.7h0M339.2 892.0h0M339.6 899.1h0M340.0 847.8h0M340.4 861.0h0M340.9 854.7h0M341.3 867.3h0M341.7 876.6h0M342.1 860.6h0M342.5 880.4h0M342.9 905.9h0M343.4 904.3h0M343.8 917.3h0M344.2 877.5h0M344.6 887.2h0M345.0 893.3h0M345.4 900.8h0M345.8 892.7h0M346.3 905.2h0M346.7 906.9h0M347.1 912.0h0M347.5 911.0h0M347.9 909.4h0M348.3 906.6h0M348.8 913.0h0M349.2 928.9h0M349.6 924.7h0M350.0 910.9h0M350.4 933.7h0M350.8 926.5h0M351.3 933.2h0M351.7 934.8h0M352.1 932.1h0M352.5 925.6h0M352.9 962.1h0M353.3 920.6h0M353.7 940.0h0M354.2 949.9h0M354.6 947.2h0M355.0 929.9h0M355.4 950.1h0M355.8 948.2h0M356.2 949.6h0M356.7 958.5h0M357.1 940.9h0M357.5 984.8h0M357.9 930.1h0M358.3 943.2h0M358.7 980.8h0M359.1 944.5h0M359.6 957.8h0M360.0 968.3h0M360.4 979.4h0M360.8 994.6h0M361.2 941.5h0M361.6 907.9h0M362.1 951.9h0M362.5 969.0h0M362.9 986.0h0M363.3 978.0h0M363.7 976.1h0M364.1 971.6h0M364.5 942.7h0M365.0 976.2h0M365.4 914.3h0M365.8 969.3h0M366.2 950.7h0M366.6 978.4h0M367.0 944.6h0M367.5 943.7h0M367.9 943.2h0M368.3 958.3h0M368.7 955.0h0M369.1 906.4h0M369.5 941.5h0M370.0 972.0h0M370.4 936.7h0M370.8 926.3h0M371.2 947.8h0M371.6 925.4h0M372.0 917.5h0M372.4 920.5h0M372.9 940.1h0M373.3 915.9h0M373.7 941.1h0M374.1 906.0h0M374.5 919.1h0M374.9 926.9h0M375.4 923.0h0M375.8 913.8h0M376.2 926.5h0M376.6 918.3h0M377.0 920.8h0M377.4 901.7h0M377.8 919.0h0M378.3 924.7h0M378.7 926.8h0M379.1 909.5h0M379.5 896.6h0M379.9 893.7h0M380.3 893.0h0M380.8 901.2h0M381.2 885.8h0M381.6 906.7h0M382.0 904.6h0M382.4 891.8h0M382.8 890.7h0M383.2 883.5h0M383.7 852.4h0M384.1 867.1h0M384.5 881.7h0M384.9 841.7h0M385.3 904.1h0M385.7 878.8h0M386.2 868.7h0M386.6 857.6h0M387.0 903.2h0M387.4 918.4h0M387.8 859.3h0M388.2 845.3h0M388.7 846.3h0M389.1 839.0h0M389.5 901.3h0M389.9 837.4h0M390.3 847.2h0M390.7 878.0h0M391.1 841.2h0M391.6 900.0h0M392.0 915.7h0M392.4 868.3h0M392.8 907.9h0M393.2 895.9h0M393.6 893.0h0M394.1 905.7h0M394.5 911.7h0M394.9 858.2h0M395.3 887.1h0M395.7 886.0h0M396.1 906.3h0M396.5 907.1h0M397.0 886.2h0M397.4 895.6h0M397.8 915.1h0M398.2 860.7h0M398.6 879.0h0M399.0 869.5h0M399.5 891.1h0M399.9 891.1h0M400.3 874.8h0M400.7 893.8h0M401.1 906.8h0M401.5 910.0h0M401.9 887.3h0M402.4 891.9h0M402.8 917.1h0M403.2 912.0h0M403.6 912.7h0M404.0 906.5h0M404.4 920.5h0M404.9 907.9h0M405.3 914.1h0M405.7 911.1h0M406.1 925.5h0M406.5 916.1h0M406.9 927.7h0M407.4 916.3h0M407.8 928.3h0M408.2 916.9h0M408.6 927.2h0M409.0 940.6h0M409.4 925.7h0M409.8 956.7h0M410.3 978.1h0M410.7 909.6h0M411.1 959.9h0M411.5 960.2h0M411.9 954.0h0M412.3 924.4h0M412.8 917.7h0M413.2 946.8h0M413.6 920.0h0M414.0 954.4h0M414.4 928.8h0M414.8 912.1h0M415.2 994.6h0M415.7 984.4h0M416.1 955.5h0M416.5 908.7h0M416.9 976.1h0M417.3 962.2h0M417.7 944.2h0M418.2 966.9h0M418.6 914.7h0M419.0 982.4h0M419.4 993.6h0M419.8 941.8h0M420.2 935.6h0M420.6 990.2h0M421.1 952.5h0M421.5 938.1h0M421.9 998.8h0M422.3 909.5h0M422.7 938.6h0M423.1 953.3h0M423.6 923.8h0M424.0 913.3h0M424.4 982.8h0M424.8 925.4h0M425.2 901.9h0M425.6 967.1h0M426.1 894.3h0M426.5 963.8h0M426.9 911.2h0M427.3 962.5h0M427.7 936.6h0M428.1 953.2h0M428.5 910.5h0M429.0 920.2h0M429.4 934.2h0M429.8 908.3h0M430.2 922.0h0M430.6 918.2h0M431.0 916.8h0M431.5 930.6h0M431.9 919.0h0M432.3 929.7h0M432.7 909.0h0M433.1 920.5h0M433.5 895.7h0M433.9 892.6h0M434.4 906.7h0M434.8 898.9h0M435.2 890.8h0M435.6 902.1h0M436.0 890.7h0M436.4 925.3h0M436.9 897.2h0M437.3 914.9h0M437.7 890.2h0M438.1 902.6h0M438.5 883.8h0M438.9 899.9h0M439.3 901.4h0M439.8 894.3h0M440.2 918.0h0M440.6 849.4h0M441.0 905.2h0M441.4 898.2h0M441.8 912.1h0M442.3 862.0h0M442.7 867.9h0M443.1 882.5h0M443.5 911.0h0M443.9 844.0h0M444.3 909.6h0M444.8 881.1h0M445.2 907.2h0M445.6 874.8h0M446.0 832.6h0M446.4 916.6h0M446.8 909.1h0M447.2 836.4h0M447.7 883.4h0M448.1 851.2h0M448.5 836.2h0M448.9 853.2h0M449.3 884.0h0M449.7 866.5h0M450.2 843.4h0M450.6 849.6h0M451.0 878.6h0M451.4 837.5h0M451.8 888.1h0M452.2 877.7h0M452.6 905.3h0M453.1 889.6h0M453.5 908.4h0M453.9 853.6h0M454.3 898.2h0M454.7 859.3h0M455.1 926.4h0M455.6 886.6h0M456.0 892.5h0M456.4 884.1h0M456.8 912.3h0M457.2 916.7h0M457.6 899.9h0M458.0 910.8h0M458.5 906.2h0M458.9 904.8h0M459.3 910.1h0M459.7 908.2h0M460.1 912.0h0M460.5 920.9h0M461.0 912.8h0M461.4 931.1h0M461.8 926.5h0M462.2 927.1h0M462.6 933.2h0M463.0 936.5h0M463.5 931.3h0M463.9 924.6h0M464.3 927.3h0M464.7 931.0h0M465.1 930.6h0M465.5 953.8h0M465.9 929.0h0M466.4 923.2h0M466.8 958.7h0M467.2 909.3h0M467.6 935.5h0M468.0 925.2h0M468.4 959.1h0M468.9 919.0h0M469.3 948.6h0M469.7 929.9h0M470.1 960.5h0M470.5 954.8h0M470.9 968.5h0M471.3 976.4h0M471.8 968.0h0M472.2 986.3h0M472.6 942.3h0M473.0 977.3h0M473.4 965.8h0M473.8 948.4h0M474.3 954.0h0M474.7 976.9h0M475.1 956.0h0M475.5 967.0h0M475.9 936.8h0M476.3 956.1h0M476.7 945.0h0M477.2 976.9h0M477.6 959.7h0M478.0 931.1h0M478.4 957.5h0M478.8 945.9h0M479.2 930.4h0M479.7 968.5h0M480.1 946.8h0M480.5 944.2h0M480.9 918.4h0M481.3 970.3h0M481.7 963.8h0M482.2 937.8h0M482.6 944.7h0M483.0 958.0h0M483.4 940.5h0M483.8 920.3h0M484.2 942.0h0M484.6 924.8h0M485.1 930.0h0M485.5 919.0h0M485.9 943.5h0M486.3 945.3h0M486.7 941.5h0M487.1 922.5h0M487.6 924.2h0M488.0 919.6h0M488.4 924.9h0M488.8 921.5h0M489.2 925.7h0M489.6 912.9h0M490.0 910.4h0M490.5 913.0h0M490.9 912.8h0M491.3 906.9h0M491.7 892.5h0M492.1 887.9h0M492.5 885.8h0M493.0 904.8h0M493.4 904.2h0M493.8 887.1h0M494.2 913.2h0M494.6 896.0h0M495.0 881.9h0M495.4 874.5h0M495.9 891.3h0M496.3 901.9h0M496.7 898.9h0M497.1 905.7h0M497.5 847.7h0M497.9 869.6h0M498.4 919.5h0M498.8 861.1h0M499.2 877.2h0M499.6 904.0h0M500.0 836.9h0M500.4 872.5h0M500.9 877.0h0M501.3 905.0h0M501.7 839.0h0M502.1 883.0h0M502.5 918.2h0M502.9 830.0h0M503.3 842.7h0M503.8 848.6h0M504.2 822.3h0M504.6 868.6h0M505.0 885.8h0M505.4 854.7h0M505.8 836.8h0M506.3 875.8h0M506.7 909.4h0M507.1 880.8h0M507.5 875.4h0M507.9 867.7h0M508.3 882.8h0M508.7 885.2h0M509.2 859.5h0M509.6 894.3h0M510.0 894.5h0M510.4 891.7h0M510.8 895.5h0M511.2 909.9h0M511.7 907.2h0M512.1 872.7h0M512.5 875.4h0M512.9 881.8h0M513.3 885.4h0M513.7 899.8h0M514.1 892.5h0M514.6 903.8h0M515.0 905.3h0M515.4 907.2h0M515.8 893.0h0M516.2 913.6h0M516.6 904.7h0M517.1 910.9h0M517.5 912.6h0M517.9 917.5h0M518.3 933.1h0M518.7 929.2h0M519.1 910.1h0M519.6 916.0h0M520.0 941.4h0M520.4 926.0h0M520.8 937.3h0M521.2 921.3h0M521.6 922.6h0M522.0 922.5h0M522.5 942.5h0M522.9 963.3h0M523.3 982.2h0M523.7 923.2h0M524.1 957.1h0M524.5 964.7h0M525.0 954.5h0M525.4 965.6h0M525.8 925.5h0M526.2 961.6h0M526.6 983.6h0M527.0 974.8h0M527.4 919.7h0M527.9 925.7h0M528.3 940.5h0M528.7 921.7h0M529.1 919.3h0M529.5 1000.2h0M529.9 942.2h0M530.4 956.1h0M530.8 920.9h0M531.2 988.0h0M531.6 924.3h0M532.0 992.2h0M532.4 937.3h0M532.8 922.4h0M533.3 998.8h0M533.7 967.7h0M534.1 940.9h0M534.5 972.9h0M534.9 927.2h0M535.3 1005.4h0M535.8 959.0h0M536.2 964.0h0M536.6 956.9h0M537.0 920.9h0M537.4 956.8h0M537.8 964.6h0M538.3 907.6h0M538.7 953.2h0M539.1 950.5h0M539.5 971.0h0M539.9 934.5h0M540.3 922.8h0M540.7 916.8h0M541.2 918.4h0M541.6 927.7h0M542.0 921.7h0M542.4 916.9h0M542.8 939.0h0M543.2 924.9h0M543.7 924.1h0M544.1 925.4h0M544.5 917.9h0M544.9 920.9h0M545.3 926.8h0M545.7 905.9h0M546.1 916.7h0M546.6 905.6h0M547.0 916.2h0M547.4 893.9h0M547.8 898.4h0M548.2 896.8h0M548.6 902.0h0M549.1 913.8h0M549.5 873.2h0M549.9 886.2h0M550.3 870.5h0M550.7 892.0h0M551.1 888.5h0M551.5 907.5h0M552.0 865.5h0M552.4 863.8h0M552.8 872.2h0M553.2 901.6h0M553.6 913.3h0M554.0 910.1h0M554.5 913.1h0M554.9 854.6h0M555.3 900.7h0M555.7 870.1h0M556.1 884.0h0M556.5 876.4h0M557.0 892.9h0M557.4 846.7h0M557.8 886.6h0M558.2 859.0h0M558.6 849.1h0M559.0 849.7h0M559.4 878.3h0M559.9 891.2h0M560.3 855.6h0M560.7 897.6h0M561.1 875.8h0M561.5 915.1h0M561.9 875.9h0M562.4 905.7h0M562.8 840.4h0M563.2 894.9h0M563.6 900.7h0M564.0 893.9h0M564.4 903.7h0M564.8 854.5h0M565.3 852.4h0M565.7 882.7h0M566.1 885.2h0M566.5 908.0h0M566.9 919.7h0M567.3 863.9h0M567.8 854.1h0M568.2 891.8h0M568.6 871.5h0M569.0 889.0h0M569.4 924.3h0M569.8 910.4h0M570.2 901.5h0M570.7 889.3h0M571.1 911.4h0M571.5 898.6h0M571.9 919.5h0M572.3 919.0h0M572.7 925.3h0M573.2 918.7h0M573.6 909.5h0M574.0 906.3h0M574.4 913.4h0M574.8 922.0h0M575.2 927.7h0M575.7 921.0h0M576.1 925.8h0M576.5 934.8h0M576.9 930.6h0M577.3 914.2h0M577.7 928.5h0M578.1 957.9h0M578.6 936.5h0M579.0 939.2h0M579.4 916.9h0M579.8 932.3h0M580.2 990.1h0M580.6 929.2h0M581.1 964.0h0M581.5 939.6h0M581.9 920.1h0M582.3 940.7h0M582.7 985.8h0M583.1 957.5h0M583.5 1003.4h0M584.0 994.9h0M584.4 928.8h0M584.8 988.1h0M585.2 972.2h0M585.6 950.9h0M586.0 967.9h0M586.5 922.0h0M586.9 960.2h0M587.3 980.3h0M587.7 913.4h0M588.1 942.2h0M588.5 945.6h0M588.9 960.1h0M589.4 920.1h0M589.8 982.1h0M590.2 936.0h0M590.6 973.2h0M591.0 934.9h0M591.4 943.9h0M591.9 960.3h0M592.3 933.6h0M592.7 933.6h0M593.1 967.6h0M593.5 963.1h0M593.9 965.8h0M594.4 963.2h0M594.8 918.2h0M595.2 973.7h0M595.6 936.0h0M596.0 921.2h0M596.4 949.5h0M596.8 934.2h0M597.3 927.1h0M597.7 937.6h0M598.1 929.2h0M598.5 921.9h0M598.9 919.4h0M599.3 920.9h0M599.8 917.8h0M600.2 922.3h0M600.6 911.7h0M601.0 924.9h0M601.4 916.2h0M601.8 897.9h0M602.2 904.4h0M602.7 900.1h0M603.1 914.5h0M603.5 910.4h0M603.9 877.5h0M604.3 888.8h0M604.7 895.1h0M605.2 898.4h0M605.6 902.2h0M606.0 893.1h0M606.4 898.3h0M606.8 890.4h0M607.2 896.7h0M607.6 901.8h0M608.1 901.4h0M608.5 910.9h0M608.9 892.9h0M609.3 878.1h0M609.7 908.1h0M610.1 899.2h0M610.6 862.2h0M611.0 851.7h0M611.4 854.4h0M611.8 906.6h0M612.2 823.9h0M612.6 885.7h0M613.1 850.1h0M613.5 929.0h0M613.9 891.7h0M614.3 890.1h0M614.7 893.2h0M615.1 853.0h0M615.5 892.1h0M616.0 856.4h0M616.4 909.2h0M616.8 842.6h0M617.2 913.5h0M617.6 842.9h0M618.0 911.4h0M618.5 918.0h0M618.9 869.2h0M619.3 842.3h0M619.7 852.4h0M620.1 878.5h0M620.5 886.1h0M620.9 915.6h0M621.4 873.5h0M621.8 906.3h0M622.2 900.9h0M622.6 871.6h0M623.0 884.0h0M623.4 854.6h0M623.9 877.5h0M624.3 898.0h0M624.7 908.3h0M625.1 874.9h0M625.5 894.2h0M625.9 908.7h0M626.3 904.3h0M626.8 909.2h0M627.2 900.1h0M627.6 904.8h0M628.0 926.8h0M628.4 902.6h0M628.8 916.7h0M629.3 913.1h0M629.7 917.5h0M630.1 928.5h0M630.5 932.4h0M630.9 932.3h0M631.3 904.2h0M631.8 914.3h0M632.2 928.7h0M632.6 926.6h0M633.0 912.0h0M633.4 915.6h0M633.8 945.5h0M634.2 909.3h0M634.7 925.1h0M635.1 981.4h0M635.5 935.1h0M635.9 971.5h0M636.3 971.9h0M636.7 922.1h0M637.2 963.1h0M637.6 942.0h0M638.0 959.2h0M638.4 929.4h0M638.8 973.7h0M639.2 932.6h0M639.6 944.1h0M640.1 929.9h0M640.5 956.6h0M640.9 934.5h0M641.3 964.5h0M641.7 917.4h0M642.1 950.2h0M642.6 978.6h0M643.0 949.7h0M643.4 954.0h0M643.8 978.3h0M644.2 977.4h0M644.6 989.2h0M645.0 926.8h0M645.5 986.8h0M645.9 981.4h0M646.3 983.3h0M646.7 934.9h0M647.1 992.4h0M647.5 911.1h0M648.0 973.3h0M648.4 915.7h0M648.8 910.3h0M649.2 927.0h0M649.6 979.7h0M650.0 971.6h0M650.5 961.8h0M650.9 945.4h0M651.3 925.2h0M651.7 935.6h0M652.1 961.2h0M652.5 926.0h0M652.9 937.6h0M653.4 924.7h0M653.8 935.5h0M654.2 920.3h0M654.6 927.6h0M655.0 940.8h0M655.4 921.0h0M655.9 902.2h0M656.3 925.3h0M656.7 914.3h0M657.1 910.4h0M657.5 924.1h0M657.9 912.0h0M658.3 899.6h0M658.8 904.7h0M659.2 916.8h0M659.6 895.9h0M660.0 893.1h0M660.4 914.2h0M660.8 893.7h0M661.3 902.7h0M661.7 881.1h0M662.1 894.4h0M662.5 880.5h0M662.9 886.6h0M663.3 895.2h0M663.7 905.0h0M664.2 859.8h0M664.6 931.3h0M665.0 874.4h0M665.4 867.7h0M665.8 893.8h0M666.2 860.4h0M666.7 861.1h0M667.1 838.0h0M667.5 907.5h0M667.9 895.6h0M668.3 864.6h0M668.7 858.7h0M669.2 863.4h0M669.6 859.7h0M670.0 902.8h0M670.4 840.6h0M670.8 877.2h0M671.2 884.7h0M671.6 886.6h0M672.1 856.4h0M672.5 885.8h0M672.9 899.4h0M673.3 899.0h0M673.7 870.7h0M674.1 835.0h0M674.6 924.2h0M675.0 879.4h0M675.4 920.8h0M675.8 905.8h0M676.2 886.9h0M676.6 867.4h0M677.0 912.5h0M677.5 878.2h0M677.9 888.3h0M678.3 883.5h0M678.7 921.3h0M679.1 885.5h0M679.5 897.4h0M680.0 903.0h0M680.4 909.6h0M680.8 910.9h0M681.2 911.2h0M681.6 893.0h0M682.0 902.2h0M682.4 884.7h0M682.9 890.8h0M683.3 925.2h0M683.7 900.7h0M684.1 904.0h0M684.5 911.5h0M684.9 916.9h0M685.4 909.4h0M685.8 925.7h0M686.2 915.5h0M686.6 921.5h0M687.0 909.0h0M687.4 927.6h0M687.9 923.5h0M688.3 945.7h0M688.7 925.7h0M689.1 949.8h0M689.5 941.9h0M689.9 951.1h0M690.3 931.8h0M690.8 933.2h0M691.2 947.9h0M691.6 939.7h0M692.0 971.5h0M692.4 929.2h0M692.8 949.2h0M693.3 968.5h0M693.7 934.6h0M694.1 918.6h0M694.5 924.5h0M694.9 976.9h0M695.3 970.9h0M695.7 976.2h0M696.2 972.5h0M696.6 974.6h0M697.0 999.6h0M697.4 986.6h0M697.8 954.4h0M698.2 908.2h0M698.7 938.0h0M699.1 942.7h0M699.5 948.2h0M699.9 962.1h0M700.3 940.0h0M700.7 985.8h0M701.1 951.6h0M701.6 922.2h0M702.0 942.9h0M702.4 963.8h0M702.8 943.7h0M703.2 973.5h0M703.6 941.1h0M704.1 922.1h0M704.5 935.8h0M704.9 958.0h0M705.3 964.1h0M705.7 937.5h0M706.1 966.4h0M706.6 934.4h0M707.0 969.0h0M707.4 928.4h0M707.8 912.7h0M708.2 946.4h0M708.6 918.3h0M709.0 965.7h0M709.5 938.8h0M709.9 940.4h0M710.3 927.4h0M710.7 925.4h0M711.1 905.6h0M711.5 905.7h0M712.0 919.7h0M712.4 922.6h0M712.8 924.9h0M713.2 914.5h0M713.6 910.9h0M714.0 912.4h0M714.4 919.1h0M714.9 911.0h0M715.3 903.9h0M715.7 900.8h0M716.1 898.6h0M716.5 882.6h0M716.9 916.6h0M717.4 905.2h0M717.8 897.3h0M718.2 925.2h0M718.6 892.3h0M719.0 868.8h0M719.4 900.3h0M719.8 842.1h0M720.3 884.2h0M720.7 905.7h0M721.1 872.1h0M721.5 842.8h0M721.9 848.1h0M722.3 875.1h0M722.8 907.6h0M723.2 883.8h0M723.6 908.7h0M724.0 829.4h0M724.4 832.9h0M724.8 877.1h0M725.3 917.6h0M725.7 894.2h0M726.1 849.8h0M726.5 900.4h0M726.9 918.3h0M727.3 859.3h0M727.7 841.5h0M728.2 866.7h0M728.6 871.8h0M729.0 912.0h0M729.4 870.9h0M729.8 895.8h0M730.2 895.6h0M730.7 897.0h0M731.1 851.5h0M731.5 852.5h0M731.9 909.8h0M732.3 844.1h0M732.7 872.0h0M733.1 913.9h0M733.6 880.0h0M734.0 887.8h0M734.4 888.2h0M734.8 901.1h0M735.2 864.0h0M735.6 889.6h0M736.1 871.3h0M736.5 891.9h0M736.9 897.9h0M737.3 908.0h0M737.7 912.2h0M738.1 923.3h0M738.5 902.8h0M739.0 887.1h0M739.4 906.7h0M739.8 905.0h0M740.2 927.9h0M740.6 933.1h0M741.0 929.3h0M741.5 922.5h0M741.9 931.7h0M742.3 941.7h0M742.7 911.5h0M743.1 940.1h0M743.5 913.2h0M744.0 923.2h0M744.4 932.0h0M744.8 923.8h0M745.2 919.5h0M745.6 901.9h0M746.0 955.5h0M746.4 952.5h0M746.9 962.6h0M747.3 960.5h0M747.7 955.9h0M748.1 966.7h0M748.5 964.9h0M748.9 927.4h0M749.4 944.4h0M749.8 959.2h0M750.2 974.1h0M750.6 985.3h0M751.0 993.5h0M751.4 976.2h0M751.8 973.7h0M752.3 994.2h0M752.7 940.5h0M753.1 981.0h0M753.5 969.5h0M753.9 933.4h0M754.3 936.7h0M754.8 954.4h0M755.2 986.4h0M755.6 977.6h0M756.0 992.1h0M756.4 992.7h0M756.8 1004.6h0M757.2 939.8h0M757.7 980.6h0M758.1 955.8h0M758.5 989.4h0M758.9 916.0h0M759.3 923.0h0M759.7 987.9h0M760.2 944.1h0M760.6 937.7h0M761.0 968.1h0M761.4 958.5h0M761.8 929.3h0M762.2 970.5h0M762.7 959.7h0M763.1 922.7h0M763.5 961.8h0M763.9 927.0h0M764.3 912.3h0M764.7 916.4h0M765.1 958.2h0M765.6 949.6h0M766.0 931.8h0M766.4 938.2h0M766.8 905.5h0M767.2 921.5h0M767.6 931.4h0M768.1 919.2h0M768.5 924.4h0M768.9 931.4h0M769.3 921.2h0M769.7 899.2h0M770.1 918.0h0M770.5 921.5h0M771.0 906.5h0M771.4 914.9h0M771.8 916.8h0M772.2 909.4h0M772.6 916.0h0M773.0 900.8h0M773.5 883.6h0M773.9 895.0h0M774.3 884.3h0M774.7 873.3h0M775.1 928.5h0M775.5 885.6h0M775.9 848.0h0M776.4 917.1h0M776.8 919.8h0M777.2 890.4h0M777.6 908.8h0M778.0 863.3h0M778.4 875.7h0M778.9 849.1h0M779.3 874.7h0M779.7 874.1h0M780.1 862.6h0M780.5 888.6h0M780.9 837.3h0M781.4 850.8h0M781.8 868.6h0M782.2 832.8h0M782.6 891.5h0M783.0 883.6h0M783.4 881.3h0M783.8 826.1h0M784.3 891.5h0M784.7 831.7h0M785.1 872.6h0M785.5 909.0h0M785.9 876.7h0M786.3 836.6h0M786.8 836.6h0M787.2 875.1h0M787.6 865.2h0M788.0 885.4h0M788.4 871.1h0M788.8 883.0h0M789.2 909.8h0M789.7 884.2h0M790.1 903.4h0M790.5 878.8h0M790.9 901.1h0M791.3 877.6h0M791.7 870.5h0M792.2 903.8h0M792.6 888.8h0M793.0 888.7h0M793.4 893.2h0M793.8 916.9h0M794.2 876.1h0M794.6 904.5h0M795.1 920.4h0M795.5 899.2h0M795.9 917.9h0M796.3 910.8h0M796.7 906.5h0M797.1 926.7h0M797.6 919.4h0M798.0 918.3h0M798.4 917.6h0M798.8 915.9h0M799.2 935.9h0M799.6 930.4h0M800.1 940.9h0M800.5 937.2h0M800.9 942.4h0M801.3 961.3h0M801.7 953.1h0M802.1 944.1h0M802.5 968.8h0M803.0 925.3h0M803.4 961.1h0M803.8 921.1h0M804.2 961.7h0M804.6 931.1h0M805.0 915.3h0M805.5 948.1h0M805.9 943.0h0M806.3 953.6h0M806.7 932.9h0M807.1 917.5h0M807.5 939.9h0M807.9 928.7h0M808.4 979.3h0M808.8 915.7h0M809.2 937.1h0M809.6 973.4h0M810.0 958.5h0M810.4 932.0h0M810.9 994.7h0M811.3 988.7h0M811.7 984.4h0M812.1 924.9h0M812.5 919.9h0M812.9 971.6h0M813.3 959.7h0M813.8 963.4h0M814.2 991.4h0M814.6 991.2h0M815.0 960.6h0M815.4 985.8h0M815.8 920.9h0M816.3 954.3h0M816.7 959.7h0M817.1 936.1h0M817.5 926.6h0M817.9 928.4h0M818.3 952.3h0M818.8 928.2h0M819.2 935.2h0M819.6 951.9h0M820.0 973.6h0M820.4 948.9h0M820.8 952.9h0M821.2 917.3h0M821.7 945.6h0M822.1 943.2h0M822.5 930.2h0M822.9 936.2h0M823.3 940.1h0M823.7 913.0h0M824.2 920.3h0M824.6 926.1h0M825.0 915.3h0M825.4 914.4h0M825.8 920.8h0M826.2 906.0h0M826.6 914.7h0M827.1 906.3h0M827.5 899.4h0M827.9 911.4h0M828.3 888.8h0M828.7 872.3h0M829.1 908.4h0M829.6 898.2h0M830.0 870.2h0M830.4 905.1h0M830.8 886.7h0M831.2 881.5h0M831.6 870.9h0M832.0 872.9h0M832.5 878.7h0M832.9 917.7h0M833.3 845.9h0M833.7 886.1h0M834.1 903.7h0M834.5 850.9h0M835.0 868.5h0M835.4 904.9h0M835.8 861.0h0M836.2 866.6h0M836.6 920.4h0M837.0 846.5h0M837.5 879.8h0M837.9 859.7h0M838.3 865.8h0M838.7 860.3h0M839.1 835.5h0M839.5 858.6h0M839.9 827.1h0M840.4 908.5h0M840.8 835.9h0M841.2 862.1h0M841.6 912.0h0M842.0 833.0h0M842.4 915.9h0M842.9 892.7h0M843.3 865.2h0M843.7 855.0h0M844.1 911.0h0M844.5 892.7h0M844.9 908.5h0M845.3 849.8h0M845.8 867.4h0M846.2 910.6h0M846.6 868.5h0M847.0 864.0h0M847.4 869.6h0M847.8 883.7h0M848.3 895.0h0M848.7 888.7h0M849.1 917.7h0M849.5 897.9h0M849.9 908.7h0M850.3 878.9h0M850.7 892.6h0M851.2 897.7h0M851.6 904.5h0M852.0 893.2h0M852.4 896.5h0M852.8 903.2h0M853.2 907.1h0M853.7 911.6h0M854.1 913.2h0M854.5 917.2h0M854.9 921.2h0M855.3 926.8h0M855.7 917.9h0M856.2 941.9h0M856.6 935.0h0M857.0 938.2h0M857.4 957.9h0M857.8 940.9h0M858.2 970.3h0M858.6 938.5h0M859.1 957.5h0M859.5 935.3h0M859.9 974.2h0M860.3 943.9h0M860.7 940.1h0M861.1 939.9h0M861.6 942.6h0M862.0 996.9h0M862.4 987.4h0M862.8 966.1h0M863.2 936.6h0M863.6 936.0h0M864.0 932.5h0M864.5 983.1h0M864.9 983.9h0M865.3 970.8h0M865.7 970.1h0M866.1 920.2h0M866.5 976.3h0M867.0 967.2h0M867.4 933.3h0M867.8 967.6h0M868.2 1006.2h0M868.6 939.9h0M869.0 1006.1h0M869.4 920.4h0M869.9 986.4h0M870.3 916.1h0M870.7 984.8h0M871.1 940.0h0M871.5 965.4h0M871.9 973.0h0M872.4 940.1h0M872.8 918.4h0M873.2 938.2h0M873.6 988.2h0M874.0 966.8h0M874.4 955.2h0M874.9 925.0h0M875.3 911.0h0M875.7 921.9h0M876.1 941.8h0M876.5 946.9h0M876.9 926.5h0M877.3 924.1h0M877.8 936.6h0M878.2 923.2h0M878.6 921.0h0M879.0 913.5h0M879.4 918.1h0M879.8 916.5h0M880.3 922.5h0M880.7 929.4h0M881.1 909.6h0M881.5 899.9h0M881.9 923.4h0M882.3 920.8h0M882.7 895.8h0M883.2 896.9h0M883.6 908.1h0M884.0 917.4h0M884.4 913.7h0M884.8 888.6h0M885.2 904.2h0M885.7 889.4h0M886.1 912.4h0M886.5 904.5h0M886.9 902.6h0M887.3 902.7h0M887.7 872.2h0M888.1 898.8h0M888.6 900.4h0M889.0 877.4h0M889.4 845.8h0M889.8 853.5h0M890.2 891.7h0M890.6 907.2h0M891.1 882.3h0M891.5 911.7h0M891.9 875.5h0M892.3 875.7h0M892.7 900.9h0M893.1 874.1h0M893.6 838.6h0M894.0 899.3h0M894.4 866.5h0M894.8 837.9h0M895.2 826.1h0M895.6 858.5h0M896.0 888.8h0M896.5 884.9h0M896.9 912.3h0M897.3 859.2h0M897.7 846.2h0M898.1 886.6h0M898.5 904.4h0M899.0 914.3h0M899.4 842.3h0M899.8 916.3h0M900.2 868.6h0M900.6 882.2h0M901.0 869.0h0M901.4 883.5h0M901.9 878.8h0M902.3 868.5h0M902.7 859.2h0M903.1 911.2h0M903.5 864.1h0M903.9 880.3h0M904.4 867.6h0M904.8 912.6h0M905.2 895.1h0M905.6 884.0h0M906.0 889.0h0M906.4 898.8h0M906.8 910.7h0M907.3 907.5h0M907.7 898.0h0M908.1 904.8h0M908.5 906.6h0M908.9 900.0h0M909.3 919.5h0M909.8 916.4h0M910.2 924.0h0M910.6 918.7h0M911.0 919.4h0M911.4 927.7h0M911.8 920.3h0M912.3 931.4h0M912.7 933.6h0M913.1 927.8h0M913.5 915.4h0M913.9 922.0h0M914.3 953.5h0M914.7 925.9h0M915.2 922.0h0M915.6 931.0h0M916.0 930.0h0M916.4 976.0h0M916.8 979.5h0M917.2 923.4h0M917.7 914.9h0M918.1 917.6h0M918.5 941.3h0M918.9 961.8h0M919.3 963.1h0M919.7 983.0h0M920.1 972.6h0M920.6 935.1h0M921.0 983.1h0M921.4 1000.0h0M921.8 997.8h0M922.2 990.9h0M922.6 959.9h0M923.1 925.8h0M923.5 941.8h0M923.9 967.7h0M924.3 921.2h0M924.7 967.3h0M925.1 973.3h0M925.5 956.8h0M926.0 975.8h0M926.4 940.7h0M926.8 993.5h0M927.2 955.4h0M927.6 989.5h0M928.0 982.3h0M928.5 982.1h0M928.9 928.2h0M929.3 961.8h0M929.7 934.1h0M930.1 929.1h0M930.5 921.1h0M931.0 942.2h0M931.4 946.9h0M931.8 972.9h0M932.2 954.4h0M932.6 931.6h0M933.0 907.6h0M933.4 938.3h0M933.9 943.9h0M934.3 934.5h0M934.7 943.5h0M935.1 927.8h0M935.5 932.6h0M935.9 921.2h0M936.4 908.4h0M936.8 915.4h0M937.2 924.3h0M937.6 928.6h0M938.0 917.7h0M938.4 910.7h0M938.8 907.4h0M939.3 915.5h0M939.7 895.5h0M940.1 888.1h0M940.5 889.2h0M940.9 880.7h0M941.3 891.9h0M941.8 911.9h0M942.2 901.1h0M942.6 910.3h0M943.0 910.1h0M943.4 885.2h0M943.8 877.4h0M944.2 878.0h0M944.7 897.6h0M945.1 857.8h0M945.5 907.8h0M945.9 877.1h0M946.3 892.1h0M946.7 855.3h0M947.2 874.8h0M947.6 906.1h0M948.0 866.4h0M948.4 888.6h0M948.8 863.0h0M949.2 902.2h0M949.7 898.6h0M950.1 861.4h0M950.5 874.0h0M950.9 870.5h0M951.3 854.8h0M951.7 901.0h0M952.1 844.8h0M952.6 858.6h0M953.0 893.4h0M953.4 859.8h0M953.8 893.5h0M954.2 845.5h0M954.6 847.7h0M955.1 854.1h0M955.5 852.4h0M955.9 916.0h0M956.3 916.1h0M956.7 868.0h0M957.1 838.1h0M957.5 883.5h0M958.0 879.1h0M958.4 891.6h0M958.8 874.7h0M959.2 868.8h0M959.6 893.6h0M960.0 891.8h0M960.5 894.2h0M960.9 914.9h0M961.3 882.6h0M961.7 919.9h0M962.1 878.4h0M962.5 890.7h0M962.9 894.1h0M963.4 888.2h0M963.8 894.1h0M964.2 925.3h0M964.6 910.7h0M965.0 915.7h0M965.4 928.9h0M965.9 918.9h0M966.3 919.7h0M966.7 919.5h0M967.1 904.4h0M967.5 913.3h0M967.9 925.6h0M968.4 935.3h0M968.8 934.5h0M969.2 932.2h0M969.6 921.0h0M970.0 951.5h0M970.4 944.8h0M970.8 951.5h0M971.3 970.5h0M971.7 950.9h0M972.1 948.6h0M972.5 956.9h0M972.9 973.5h0M973.3 919.0h0M973.8 938.7h0M974.2 957.1h0M974.6 920.9h0M975.0 983.0h0M975.4 969.3h0M975.8 938.9h0M976.2 975.0h0M976.7 988.4h0M977.1 980.4h0M977.5 951.1h0M977.9 954.5h0M978.3 986.9h0M978.7 952.5h0M979.2 952.4h0M979.6 917.7h0M980.0 927.5h0M980.4 975.5h0M980.8 993.0h0M981.2 1001.5h0M981.6 971.8h0M982.1 980.3h0M982.5 983.9h0M982.9 934.5h0M983.3 976.9h0M983.7 934.0h0M984.1 987.7h0M984.6 966.7h0M985.0 967.8h0M985.4 953.6h0M985.8 963.0h0M986.2 974.8h0M986.6 956.6h0M987.1 960.4h0M987.5 956.2h0M987.9 937.4h0M988.3 921.9h0M988.7 912.0h0M989.1 949.7h0M989.5 914.8h0M990.0 939.5h0M990.4 920.0h0M990.8 931.9h0M991.2 933.1h0M991.6 951.0h0M992.0 924.7h0M992.5 912.3h0M992.9 924.1h0M993.3 913.7h0M993.7 924.5h0M994.1 905.7h0M994.5 922.5h0M994.9 924.9h0M995.4 889.5h0M995.8 912.0h0M996.2 903.0h0M996.6 905.9h0M997.0 922.0h0M997.4 891.6h0M997.9 915.2h0M998.3 907.6h0M998.7 921.0h0M999.1 863.4h0M999.5 896.8h0M999.9 871.4h0M1000.3 901.2h0M1000.8 896.9h0M1001.2 886.0h0M1001.6 884.9h0M1002.0 852.4h0M1002.4 856.3h0M1002.8 908.9h0M1003.3 858.7h0M1003.7 851.8h0M1004.1 883.1h0M1004.5 918.4h0M1004.9 861.1h0M1005.3 845.3h0M1005.8 863.8h0M1006.2 909.4h0M1006.6 858.9h0M1007.0 871.9h0M1007.4 896.0h0M1007.8 863.6h0M1008.2 875.2h0M1008.7 887.1h0M1009.1 854.3h0M1009.5 901.3h0M1009.9 867.9h0M1010.3 830.3h0M1010.7 911.7h0M1011.2 861.9h0M1011.6 861.1h0M1012.0 856.9h0M1012.4 827.5h0M1012.8 877.9h0M1013.2 898.4h0M1013.6 863.5h0M1014.1 918.9h0M1014.5 849.3h0M1014.9 895.8h0M1015.3 911.5h0M1015.7 917.6h0M1016.1 895.2h0M1016.6 908.4h0M1017.0 904.8h0M1017.4 908.7h0M1017.8 898.5h0M1018.2 892.4h0M1018.6 889.2h0M1019.0 900.5h0M1019.5 903.1h0M1019.9 902.1h0M1020.3 896.7h0M1020.7 917.1h0M1021.1 907.2h0M1021.5 918.2h0M1022.0 914.9h0M1022.4 903.9h0M1022.8 922.8h0M1023.2 933.2h0M1023.6 936.2h0M1024.0 928.4h0M1024.5 923.5h0M1024.9 933.7h0M1025.3 929.3h0M1025.7 945.2h0M1026.1 954.0h0M1026.5 921.1h0M1026.9 938.2h0M1027.4 911.7h0M1027.8 948.4h0M1028.2 920.3h0M1028.6 937.4h0M1029.0 932.5h0M1029.4 955.3h0M1029.9 986.2h0M1030.3 945.8h0M1030.7 954.5h0M1031.1 943.5h0M1031.5 949.6h0M1031.9 983.9h0M1032.3 960.3h0M1032.8 976.8h0M1033.2 928.5h0M1033.6 932.5h0M1034.0 917.7h0M1034.4 938.5h0M1034.8 920.3h0M1035.3 965.7h0M1035.7 986.4h0M1036.1 1000.2h0M1036.5 914.4h0M1036.9 935.1h0M1037.3 975.4h0M1037.7 928.4h0M1038.2 989.6h0M1038.6 1008.5h0M1039.0 913.5h0M1039.4 914.5h0M1039.8 974.2h0M1040.2 929.9h0M1040.7 937.4h0M1041.1 994.3h0M1041.5 932.0h0M1041.9 942.8h0M1042.3 929.1h0M1042.7 956.7h0M1043.2 955.4h0M1043.6 919.0h0M1044.0 934.2h0M1044.4 944.8h0M1044.8 939.0h0M1045.2 948.1h0M1045.6 954.1h0M1046.1 932.2h0M1046.5 941.5h0M1046.9 928.5h0M1047.3 942.3h0M1047.7 920.8h0M1048.1 922.3h0M1048.6 926.5h0M1049.0 923.2h0M1049.4 919.3h0M1049.8 921.0h0M1050.2 922.1h0M1050.6 893.4h0M1051.0 909.6h0M1051.5 909.3h0M1051.9 903.8h0M1052.3 890.4h0M1052.7 906.6h0M1053.1 886.9h0M1053.5 895.6h0M1054.0 909.9h0M1054.4 882.2h0M1054.8 896.6h0M1055.2 895.0h0M1055.6 866.2h0M1056.0 877.8h0M1056.4 873.5h0M1056.9 895.9h0M1057.3 843.2h0M1057.7 903.2h0M1058.1 885.4h0M1058.5 874.1h0M1058.9 862.4h0M1059.4 853.6h0M1059.8 922.7h0M1060.2 899.6h0M1060.6 864.1h0M1061.0 831.6h0M1061.4 827.6h0M1061.9 867.9h0M1062.3 845.8h0M1062.7 849.7h0M1063.1 873.4h0M1063.5 910.1h0M1063.9 843.2h0M1064.3 903.7h0M1064.8 842.2h0M1065.2 909.7h0M1065.6 866.1h0M1066.0 842.5h0M1066.4 918.4h0M1066.8 845.1h0M1067.3 834.6h0M1067.7 877.5h0M1068.1 861.3h0M1068.5 852.3h0M1068.9 894.0h0M1069.3 897.7h0M1069.7 911.6h0M1070.2 906.3h0M1070.6 870.4h0M1071.0 899.5h0M1071.4 859.9h0M1071.8 865.7h0M1072.2 864.3h0M1072.7 901.9h0M1073.1 881.2h0M1073.5 877.1h0M1073.9 891.3h0M1074.3 920.8h0M1074.7 893.4h0M1075.1 910.2h0M1075.6 917.0h0M1076.0 918.1h0M1076.4 908.0h0M1076.8 904.2h0M1077.2 921.3h0M1077.6 906.9h0M1078.1 908.4h0M1078.5 904.0h0M1078.9 921.4h0M1079.3 924.7h0M1079.7 941.2h0M1080.1 916.0h0M1080.6 915.0h0M1081.0 920.1h0M1081.4 955.0h0M1081.8 949.1h0M1082.2 919.6h0M1082.6 943.5h0M1083.0 961.2h0M1083.5 953.4h0M1083.9 925.8h0M1084.3 973.7h0M1084.7 908.5h0M1085.1 927.4h0M1085.5 937.9h0M1086.0 951.6h0M1086.4 942.3h0M1086.8 976.8h0M1087.2 967.3h0M1087.6 948.3h0M1088.0 997.4h0M1088.4 905.3h0M1088.9 940.7h0M1089.3 991.3h0M1089.7 913.7h0M1090.1 982.7h0M1090.5 917.3h0M1090.9 995.4h0M1091.4 969.6h0M1091.8 931.8h0M1092.2 963.0h0M1092.6 995.8h0M1093.0 924.0h0M1093.4 933.5h0M1093.8 956.5h0M1094.3 1017.2h0M1094.7 1007.5h0M1095.1 935.8h0M1095.5 981.3h0M1095.9 989.4h0M1096.3 931.4h0M1096.8 922.1h0M1097.2 956.8h0M1097.6 955.2h0M1098.0 962.1h0M1098.4 953.9h0M1098.8 907.7h0M1099.3 926.1h0M1099.7 957.7h0M1100.1 913.1h0M1100.5 927.4h0M1100.9 929.8h0M1101.3 946.7h0M1101.7 937.1h0M1102.2 949.9h0M1102.6 935.4h0M1103.0 917.6h0M1103.4 922.3h0M1103.8 922.4h0M1104.2 927.5h0M1104.7 916.6h0M1105.1 919.4h0M1105.5 925.1h0M1105.9 900.3h0M1106.3 913.1h0M1106.7 913.1h0M1107.1 908.5h0M1107.6 909.7h0M1108.0 922.5h0M1108.4 914.3h0M1108.8 897.2h0M1109.2 920.6h0M1109.6 903.1h0M1110.1 908.4h0M1110.5 871.5h0M1110.9 897.9h0M1111.3 896.6h0M1111.7 856.6h0M1112.1 899.1h0M1112.5 891.9h0M1113.0 895.0h0M1113.4 914.9h0M1113.8 936.2h0M1114.2 857.7h0M1114.6 919.5h0M1115.0 902.9h0M1115.5 879.4h0M1115.9 893.8h0M1116.3 837.1h0M1116.7 914.3h0M1117.1 868.0h0M1117.5 848.7h0M1118.0 864.8h0M1118.4 854.9h0M1118.8 841.1h0M1119.2 908.6h0M1119.6 866.8h0M1120.0 862.7h0M1120.4 886.6h0M1120.9 836.7h0M1121.3 875.5h0M1121.7 853.8h0M1122.1 845.5h0M1122.5 846.2h0M1122.9 851.1h0M1123.4 856.6h0M1123.8 910.3h0M1124.2 845.9h0M1124.6 847.4h0M1125.0 842.2h0M1125.4 872.1h0M1125.8 883.0h0M1126.3 857.7h0M1126.7 885.6h0M1127.1 891.2h0M1127.5 880.4h0M1127.9 883.1h0M1128.3 884.2h0M1128.8 902.5h0M1129.2 902.7h0M1129.6 896.7h0M1130.0 876.2h0M1130.4 895.7h0M1130.8 888.9h0M1131.2 907.6h0M1131.7 902.7h0M1132.1 899.3h0M1132.5 914.0h0M1132.9 921.2h0M1133.3 912.0h0M1133.7 914.9h0M1134.2 929.4h0M1134.6 914.8h0M1135.0 934.2h0M1135.4 927.2h0M1135.8 922.7h0M1136.2 903.7h0M1136.7 925.3h0M1137.1 921.8h0M1137.5 926.2h0M1137.9 917.1h0M1138.3 937.2h0M1138.7 941.7h0M1139.1 934.4h0M1139.6 940.2h0M1140.0 973.0h0M1140.4 946.9h0M1140.8 972.2h0M1141.2 923.0h0M1141.6 972.0h0M1142.1 982.6h0M1142.5 966.1h0M1142.9 941.8h0M1143.3 930.6h0M1143.7 916.7h0M1144.1 951.6h0M1144.5 963.9h0M1145.0 945.6h0M1145.4 939.1h0M1145.8 980.0h0M1146.2 948.2h0M1146.6 940.9h0M1147.0 920.9h0M1147.5 950.2h0M1147.9 921.2h0M1148.3 948.8h0M1148.7 972.9h0M1149.1 920.5h0M1149.5 949.6h0M1149.9 967.4h0M1150.4 923.1h0M1150.8 943.0h0M1151.2 941.5h0M1151.6 998.0h0M1152.0 929.9h0M1152.4 965.3h0M1152.9 929.4h0M1153.3 971.4h0M1153.7 932.3h0M1154.1 992.2h0M1154.5 922.4h0M1154.9 950.6h0M1155.4 956.6h0M1155.8 945.6h0M1156.2 953.5h0M1156.6 949.6h0M1157.0 932.5h0M1157.4 935.5h0M1157.8 920.1h0M1158.3 918.5h0M1158.7 936.0h0M1159.1 919.8h0M1159.5 955.4h0M1159.9 921.3h0M1160.3 931.8h0M1160.8 926.2h0M1161.2 912.2h0M1161.6 922.5h0" stroke="#000" stroke-width="1.95" stroke-linecap="round" fill="none"/>
<path d="M40.0 916.0L42.0 907.0L44.0 898.5L46.0 890.8L48.0 884.4L50.0 879.6L52.0 876.6L54.0 875.6L56.0 876.6L58.0 879.6L60.0 884.4L62.0 890.8L64.0 898.5L66.0 907.0L68.0 916.0L70.1 925.0L72.1 933.5L74.1 941.2L76.1 947.6L78.1 952.4L80.1 955.4L82.1 956.4L84.1 955.4L86.1 952.4L88.1 947.6L90.1 941.2L92.1 933.5L94.1 925.0L96.1 916.0L98.1 907.0L100.1 898.5L102.1 890.8L104.1 884.4L106.1 879.6L108.1 876.6L110.1 875.6L112.1 876.6L114.1 879.6L116.1 884.4L118.1 890.8L120.1 898.5L122.1 907.0L124.2 916.0L126.2 925.0L128.2 933.5L130.2 941.2L132.2 947.6L134.2 952.4L136.2 955.4L138.2 956.4L140.2 955.4L142.2 952.4L144.2 947.6L146.2 941.2L148.2 933.5L150.2 925.0L152.2 916.0L154.2 907.0L156.2 898.5L158.2 890.8L160.2 884.4L162.2 879.6L164.2 876.6L166.2 875.6L168.2 876.6L170.2 879.6L172.2 884.4L174.2 890.8L176.2 898.5L178.2 907.0L180.2 916.0L182.3 925.0L184.3 933.5L186.3 941.2L188.3 947.6L190.3 952.4L192.3 955.4L194.3 956.4L196.3 955.4L198.3 952.4L200.3 947.6L202.3 941.2L204.3 933.5L206.3 925.0L208.3 916.0L210.3 907.0L212.3 898.5L214.3 890.8L216.3 884.4L218.3 879.6L220.3 876.6L222.3 875.6L224.3 876.6L226.3 879.6L228.3 884.4L230.3 890.8L232.3 898.5L234.3 907.0L236.3 916.0L238.4 925.0L240.4 933.5L242.4 941.2L244.4 947.6L246.4 952.4L248.4 955.4L250.4 956.4L252.4 955.4L254.4 952.4L256.4 947.6L258.4 941.2L260.4 933.5L262.4 925.0L264.4 916.0L266.4 907.0L268.4 898.5L270.4 890.8L272.4 884.4L274.4 879.6L276.4 876.6L278.4 875.6L280.4 876.6L282.4 879.6L284.4 884.4L286.4 890.8L288.4 898.5L290.4 907.0L292.4 916.0L294.5 925.0L296.5 933.5L298.5 941.2L300.5 947.6L302.5 952.4L304.5 955.4L306.5 956.4L308.5 955.4L310.5 952.4L312.5 947.6L314.5 941.2L316.5 933.5L318.5 925.0L320.5 916.0L322.5 907.0L324.5 898.5L326.5 890.8L328.5 884.4L330.5 879.6L332.5 876.6L334.5 875.6L336.5 876.6L338.5 879.6L340.5 884.4L342.5 890.8L344.5 898.5L346.5 907.0L348.6 916.0L350.6 925.0L352.6 933.5L354.6 941.2L356.6 947.6L358.6 952.4L360.6 955.4L362.6 956.4L364.6 955.4L366.6 952.4L368.6 947.6L370.6 941.2L372.6 933.5L374.6 925.0L376.6 916.0L378.6 907.0L380.6 898.5L382.6 890.8L384.6 884.4L386.6 879.6L388.6 876.6L390.6 875.6L392.6 876.6L394.6 879.6L396.6 884.4L398.6 890.8L400.6 898.5L402.6 907.0L404.6 916.0L406.7 925.0L408.7 933.5L410.7 941.2L412.7 947.6L414.7 952.4L416.7 955.4L418.7 956.4L420.7 955.4L422.7 952.4L424.7 947.6L426.7 941.2L428.7 933.5L430.7 925.0L432.7 916.0L434.7 907.0L436.7 898.5L438.7 890.8L440.7 884.4L442.7 879.6L444.7 876.6L446.7 875.6L448.7 876.6L450.7 879.6L452.7 884.4L454.7 890.8L456.7 898.5L458.7 907.0L460.8 916.0L462.8 925.0L464.8 933.5L466.8 941.2L468.8 947.6L470.8 952.4L472.8 955.4L474.8 956.4L476.8 955.4L478.8 952.4L480.8 947.6L482.8 941.2L484.8 933.5L486.8 925.0L488.8 916.0L490.8 907.0L492.8 898.5L494.8 890.8L496.8 884.4L498.8 879.6L500.8 876.6L502.8 875.6L504.8 876.6L506.8 879.6L508.8 884.4L510.8 890.8L512.8 898.5L514.8 907.0L516.9 916.0L518.9 925.0L520.9 933.5L522.9 941.2L524.9 947.6L526.9 952.4L528.9 955.4L530.9 956.4L532.9 955.4L534.9 952.4L536.9 947.6L538.9 941.2L540.9 933.5L542.9 925.0L544.9 916.0L546.9 907.0L548.9 898.5L550.9 890.8L552.9 884.4L554.9 879.6L556.9 876.6L558.9 875.6L560.9 876.6L562.9 879.6L564.9 884.4L566.9 890.8L568.9 898.5L570.9 907.0L573.0 916.0L575.0 925.0L577.0 933.5L579.0 941.2L581.0 947.6L583.0 952.4L585.0 955.4L587.0 956.4L589.0 955.4L591.0 952.4L593.0 947.6L595.0 941.2L597.0 933.5L599.0 925.0L601.0 916.0L603.0 907.0L605.0 898.5L607.0 890.8L609.0 884.4L611.0 879.6L613.0 876.6L615.0 875.6L617.0 876.6L619.0 879.6L621.0 884.4L623.0 890.8L625.0 898.5L627.0 907.0L629.0 916.0L631.1 925.0L633.1 933.5L635.1 941.2L637.1 947.6L639.1 952.4L641.1 955.4L643.1 956.4L645.1 955.4L647.1 952.4L649.1 947.6L651.1 941.2L653.1 933.5L655.1 925.0L657.1 916.0L659.1 907.0L661.1 898.5L663.1 890.8L665.1 884.4L667.1 879.6L669.1 876.6L671.1 875.6L673.1 876.6L675.1 879.6L677.1 884.4L679.1 890.8L681.1 898.5L683.1 907.0L685.1 916.0L687.2 925.0L689.2 933.5L691.2 941.2L693.2 947.6L695.2 952.4L697.2 955.4L699.2 956.4L701.2 955.4L703.2 952.4L705.2 947.6L707.2 941.2L709.2 933.5L711.2 925.0L713.2 916.0L715.2 907.0L717.2 898.5L719.2 890.8L721.2 884.4L723.2 879.6L725.2 876.6L727.2 875.6L729.2 876.6L731.2 879.6L733.2 884.4L735.2 890.8L737.2 898.5L739.2 907.0L741.2 916.0L743.3 925.0L745.3 933.5L747.3 941.2L749.3 947.6L751.3 952.4L753.3 955.4L755.3 956.4L757.3 955.4L759.3 952.4L761.3 947.6L763.3 941.2L765.3 933.5L767.3 925.0L769.3 916.0L771.3 907.0L773.3 898.5L775.3 890.8L777.3 884.4L779.3 879.6L781.3 876.6L783.3 875.6L785.3 876.6L787.3 879.6L789.3 884.4L791.3 890.8L793.3 898.5L795.3 907.0L797.4 916.0L799.4 925.0L801.4 933.5L803.4 941.2L805.4 947.6L807.4 952.4L809.4 955.4L811.4 956.4L813.4 955.4L815.4 952.4L817.4 947.6L819.4 941.2L821.4 933.5L823.4 925.0L825.4 916.0L827.4 907.0L829.4 898.5L831.4 890.8L833.4 884.4L835.4 879.6L837.4 876.6L839.4 875.6L841.4 876.6L843.4 879.6L845.4 884.4L847.4 890.8L849.4 898.5L851.4 907.0L853.5 916.0L855.5 925.0L857.5 933.5L859.5 941.2L861.5 947.6L863.5 952.4L865.5 955.4L867.5 956.4L869.5 955.4L871.5 952.4L873.5 947.6L875.5 941.2L877.5 933.5L879.5 925.0L881.5 916.0L883.5 907.0L885.5 898.5L887.5 890.8L889.5 884.4L891.5 879.6L893.5 876.6L895.5 875.6L897.5 876.6L899.5 879.6L901.5 884.4L903.5 890.8L905.5 898.5L907.5 907.0L909.5 916.0L911.6 925.0L913.6 933.5L915.6 941.2L917.6 947.6L919.6 952.4L921.6 955.4L923.6 956.4L925.6 955.4L927.6 952.4L929.6 947.6L931.6 941.2L933.6 933.5L935.6 925.0L937.6 916.0L939.6 907.0L941.6 898.5L943.6 890.8L945.6 884.4L947.6 879.6L949.6 876.6L951.6 875.6L953.6 876.6L955.6 879.6L957.6 884.4L959.6 890.8L961.6 898.5L963.6 907.0L965.6 916.0L967.7 925.0L969.7 933.5L971.7 941.2L973.7 947.6L975.7 952.4L977.7 955.4L979.7 956.4L981.7 955.4L983.7 952.4L985.7 947.6L987.7 941.2L989.7 933.5L991.7 925.0L993.7 916.0L995.7 907.0L997.7 898.5L999.7 890.8L1001.7 884.4L1003.7 879.6L1005.7 876.6L1007.7 875.6L1009.7 876.6L1011.7 879.6L1013.7 884.4L1015.7 890.8L1017.7 898.5L1019.7 907.0L1021.8 916.0L1023.8 925.0L1025.8 933.5L1027.8 941.2L1029.8 947.6L1031.8 952.4L1033.8 955.4L1035.8 956.4L1037.8 955.4L1039.8 952.4L1041.8 947.6L1043.8 941.2L1045.8 933.5L1047.8 925.0L1049.8 916.0L1051.8 907.0L1053.8 898.5L1055.8 890.8L1057.8 884.4L1059.8 879.6L1061.8 876.6L1063.8 875.6L1065.8 876.6L1067.8 879.6L1069.8 884.4L1071.8 890.8L1073.8 898.5L1075.8 907.0L1077.8 916.0L1079.9 925.0L1081.9 933.5L1083.9 941.2L1085.9 947.6L1087.9 952.4L1089.9 955.4L1091.9 956.4L1093.9 955.4L1095.9 952.4L1097.9 947.6L1099.9 941.2L1101.9 933.5L1103.9 925.0L1105.9 916.0L1107.9 907.0L1109.9 898.5L1111.9 890.8L1113.9 884.4L1115.9 879.6L1117.9 876.6L1119.9 875.6L1121.9 876.6L1123.9 879.6L1125.9 884.4L1127.9 890.8L1129.9 898.5L1131.9 907.0L1134.0 916.0L1136.0 925.0L1138.0 933.5L1140.0 941.2L1142.0 947.6L1144.0 952.4L1146.0 955.4L1148.0 956.4L1150.0 955.4L1152.0 952.4L1154.0 947.6L1156.0 941.2L1158.0 933.5L1160.0 925.0L1162.0 916.0" stroke="#0c0cdc" stroke-width="3.3" fill="none" stroke-linejoin="round" stroke-linecap="round"/>
<rect x="44.1" y="802" width="2.9" height="3.1" rx="0.8" fill="#cc1030"/>
</svg>

<div class="a" style="left:1217px;top:758px;width:1px;height:291px;background:#8c8c8c;"></div>
<div class="a" style="left:0;top:791px;width:1px;height:258px;background:#9a9a9a;"></div>
<span class="t" id="ttl" style="left:31.4px;top:11.34px;font-size:12px;color:#6e6e6e;letter-spacing:0.506px;">POV-Ray - C:\Users\ingo\Documents\Nim\Audio\FFT\fft_01.pov [Idle]</span>
<span class="t" id="m0" style="left:8.5px;top:37.24px;font-size:12px;color:#5c5c5c;letter-spacing:-0.448px;">File</span>
<span class="t" id="m1" style="left:41.0px;top:37.24px;font-size:12px;color:#5c5c5c;letter-spacing:0.438px;">Edit</span>
<span class="t" id="m2" style="left:77.0px;top:37.24px;font-size:12px;color:#5c5c5c;letter-spacing:0.094px;">Search</span>
<span class="t" id="m3" style="left:130.5px;top:37.24px;font-size:12px;color:#5c5c5c;letter-spacing:0.161px;">Text</span>
<span class="t" id="m4" style="left:167.5px;top:37.24px;font-size:12px;color:#5c5c5c;letter-spacing:0.628px;">Editor</span>
<span class="t" id="m5" style="left:216.0px;top:37.24px;font-size:12px;color:#5c5c5c;letter-spacing:0.297px;">Insert</span>
<span class="t" id="m6" style="left:262.3px;top:37.24px;font-size:12px;color:#5c5c5c;letter-spacing:0.348px;">Render</span>
<span class="t" id="m7" style="left:318.5px;top:37.24px;font-size:12px;color:#5c5c5c;letter-spacing:0.657px;">Options</span>
<span class="t" id="m8" style="left:378.6px;top:37.24px;font-size:12px;color:#5c5c5c;letter-spacing:0.446px;">Tools</span>
<span class="t" id="m9" style="left:423.2px;top:37.24px;font-size:12px;color:#5c5c5c;letter-spacing:0.762px;">Window</span>
<span class="t" id="m10" style="left:484.5px;top:37.24px;font-size:12px;color:#5c5c5c;letter-spacing:0.371px;">Help</span>
<span class="t" id="b0" style="left:24.7px;top:82.94px;font-size:12px;color:#1c1c1c;letter-spacing:0.342px;">New</span>
<span class="t" id="b1" style="left:72.8px;top:82.94px;font-size:12px;color:#1c1c1c;letter-spacing:0.480px;">Open</span>
<span class="t" id="b2" style="left:127.0px;top:82.94px;font-size:12px;color:#a2a2a2;letter-spacing:-0.786px;">Save</span>
<span class="t" id="b3" style="left:174.9px;top:82.94px;font-size:12px;color:#1c1c1c;letter-spacing:-0.147px;">Close</span>
<span class="t" id="b4" style="left:222.8px;top:82.94px;font-size:12px;color:#1c1c1c;letter-spacing:0.117px;">Queue</span>
<span class="t" id="b5" style="left:278.7px;top:82.94px;font-size:12px;color:#1c1c1c;letter-spacing:0.304px;">Hide</span>
<span class="t" id="b6" style="left:336.4px;top:82.94px;font-size:12px;color:#1c1c1c;letter-spacing:-0.394px;">Ini</span>
<span class="t" id="b7" style="left:372.6px;top:82.94px;font-size:12px;color:#1c1c1c;letter-spacing:-0.043px;">Sel-Run</span>
<span class="t" id="b8" style="left:434.7px;top:82.94px;font-size:12px;color:#1c1c1c;letter-spacing:-0.708px;">Run</span>
<span class="t" id="b9" style="left:479.9px;top:82.94px;font-size:12px;color:#a2a2a2;letter-spacing:-0.408px;">Pause</span>
<span class="t" id="b10" style="left:536.4px;top:82.94px;font-size:12px;color:#1c1c1c;letter-spacing:-0.188px;">Tray</span>
<span class="t" id="s1" style="left:1018.8px;top:56.59px;font-size:11px;color:#1a1a1a;letter-spacing:0.090px;">State:</span>
<span class="t" id="s2" style="left:1057.6px;top:56.59px;font-size:11px;color:#1a1a1a;letter-spacing:-0.050px;">Idle</span>
<span class="t" id="s3" style="left:1018.8px;top:69.09px;font-size:11px;color:#1a1a1a;letter-spacing:-0.329px;">Frame:</span>
<span class="t" id="s4" style="left:1057.6px;top:69.09px;font-size:11px;color:#1a1a1a;letter-spacing:-0.372px;">N/A</span>
<span class="t" id="cb" style="left:16.7px;top:113.34px;font-size:12px;color:#2a2a2a;letter-spacing:0.283px;">[800x600, AA 0.3]</span>
<span class="t" id="ed" style="left:232.8px;top:113.34px;font-size:12px;color:#2a2a2a;letter-spacing:0.495px;">+w1200 +h250 +a0.01</span>
<span class="t" id="h1" style="left:754.5px;top:112.94px;font-size:12px;color:#1a1a1a;letter-spacing:0.243px;">POV-Win</span>
<span class="t" id="h2" style="left:831.5px;top:112.94px;font-size:12px;color:#1a1a1a;letter-spacing:-0.283px;">Scene</span>
<span class="t" id="h3" style="left:908.5px;top:112.94px;font-size:12px;color:#1a1a1a;letter-spacing:-0.123px;">POV Site</span>
<span class="t" id="t1" style="left:9.4px;top:141.44px;font-size:12px;color:#1a1a1a;letter-spacing:0.414px;">Messages</span>
<span class="t" id="t2" style="left:80.2px;top:138.74px;font-size:12px;color:#1a1a1a;letter-spacing:0.367px;">fft_01.pov</span>
<span class="t" id="t3" style="left:148.3px;top:141.44px;font-size:12px;color:#1a1a1a;letter-spacing:0.305px;">fft.inc</span>
<span class="t" id="t4" style="left:202.5px;top:141.44px;font-size:12px;color:#1a1a1a;letter-spacing:0.384px;">complex.inc</span>
<span class="t" id="st0" style="left:3.6px;top:743.34px;font-size:12px;color:#1a1a1a;letter-spacing:0.122px;">File saved</span>
<span class="t" id="st1" style="left:739.5px;top:743.34px;font-size:12px;color:#1a1a1a;letter-spacing:0.214px;">26MB</span>
<span class="t" id="st2" style="left:801.4px;top:743.34px;font-size:12px;color:#1a1a1a;letter-spacing:-0.453px;">L:63</span>
<span class="t" id="st3" style="left:850.5px;top:743.34px;font-size:12px;color:#1a1a1a;letter-spacing:-0.420px;">C:47</span>
<span class="t" id="st4" style="left:905.3px;top:743.34px;font-size:12px;color:#1a1a1a;letter-spacing:-0.508px;">Ins</span>
<span class="t" id="st5" style="left:1002.8px;top:743.34px;font-size:12px;color:#1a1a1a;letter-spacing:-0.177px;">150000 PPS</span>
<span class="t" id="st6" style="left:1086.0px;top:743.34px;font-size:12px;color:#1a1a1a;letter-spacing:0.534px;">0d 00h 00m 02s</span>
<span class="t" id="tt2" style="left:32.0px;top:769.90px;font-size:12.4px;color:#747474;letter-spacing:-0.008px;">1215,257 [1.013,1.032]</span>
</body></html>
